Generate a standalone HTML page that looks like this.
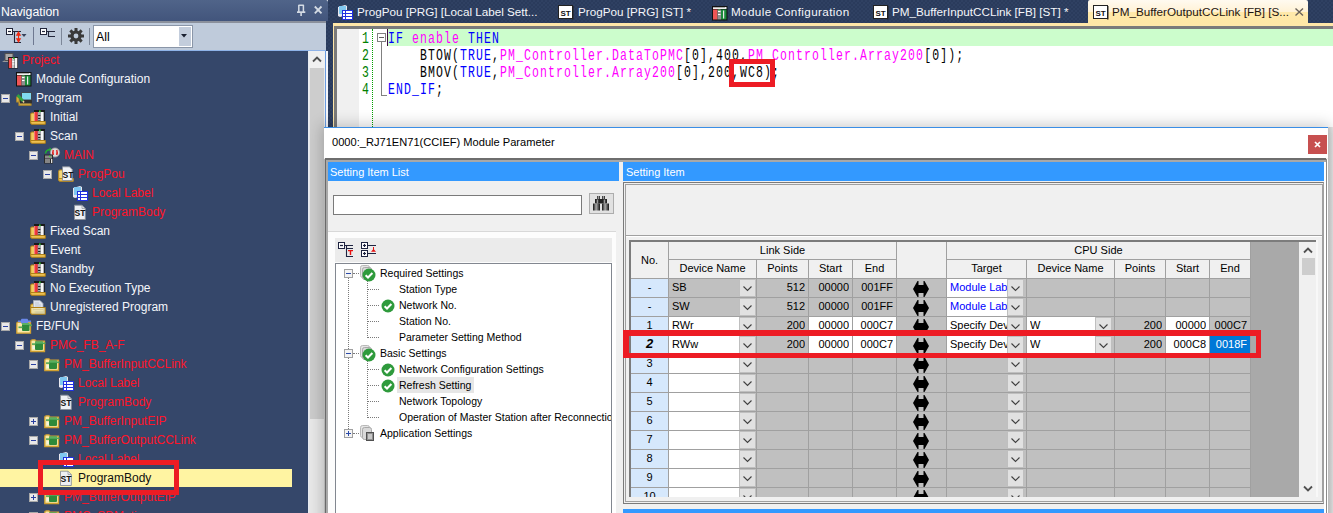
<!DOCTYPE html><html><head><meta charset="utf-8"><style>
html,body{margin:0;padding:0;} body{width:1333px;height:513px;overflow:hidden;position:relative;background:#ffffff;font-family:"Liberation Sans", sans-serif;} div{box-sizing:border-box;} svg{overflow:visible}
</style></head><body>
<div style="position:absolute;left:0px;top:0px;width:328px;height:21px;background:linear-gradient(#506489,#42557c);border-radius:0 2px 0 0;"></div>
<div style="position:absolute;left:1px;top:2px;font-size:12.3px;color:#ffffff;white-space:pre;line-height:21px;height:21px;">Navigation</div>
<svg style="position:absolute;left:290px;top:0px" width="40" height="21" viewBox="0 0 40 21"><path d="M8.5 5.3 H13.8 M8.8 5 V12 M13.4 5 V12" stroke="#d4dbe4" stroke-width="1.5" fill="none"/><rect x="7" y="11.3" width="8.3" height="1.7" fill="#d4dbe4"/><rect x="10.3" y="12.5" width="1.6" height="3.5" fill="#d4dbe4"/><path d="M24.8 6.5 L31.5 13.3 M31.5 6.5 L24.8 13.3" stroke="#d4dbe4" stroke-width="1.8"/></svg>
<div style="position:absolute;left:0px;top:21px;width:326px;height:30px;background:#bfcbdb;border-top:2px solid #8a909c;"></div>
<div style="position:absolute;left:0px;top:50px;width:326px;height:1px;background:#8fb3e8;"></div>
<svg style="position:absolute;left:0px;top:21px" width="60" height="30" viewBox="0 0 60 30"><rect x="6.5" y="7.5" width="6" height="6" fill="#fff" stroke="#22263a"/><path d="M8 10.5 H11" stroke="#22263a" stroke-width="1.2"/><path d="M12.5 10.5 H14.5 M21 10.5 H14.5 V21.5 H21" stroke="#22263a" fill="none" stroke-width="1.1"/><path d="M15.8 14.8 L18.5 10 L21.2 14.8 Z M15.8 17.2 L18.5 22 L21.2 17.2 Z" fill="#f02a10"/><rect x="18" y="14" width="1.1" height="4" fill="#f02a10"/><path d="M21.5 13 L26.5 13 L24 16 Z" fill="#36425a"/><rect x="33" y="6" width="1" height="18" fill="#6e7890"/><rect x="40.5" y="7.5" width="6" height="6" fill="#fff" stroke="#22263a"/><path d="M42 10.5 H45" stroke="#22263a" stroke-width="1.2"/><path d="M46.5 10.5 H48.5 M55 10.5 H48.5 V15.5 H55" stroke="#22263a" fill="none" stroke-width="1.1"/></svg>
<div style="position:absolute;left:61px;top:28px;width:1px;height:17px;background:#7d8798;"></div>
<svg style="position:absolute;left:68px;top:28px" width="16" height="16" viewBox="0 0 16 16"><g transform="translate(8,8)"><circle r="5.6" fill="#3a3a3a"/><circle r="2.4" fill="#bfcbdb"/><rect x="-1.5" y="-8" width="3" height="3.5" fill="#3a3a3a" transform="rotate(0)"/><rect x="-1.5" y="-8" width="3" height="3.5" fill="#3a3a3a" transform="rotate(45)"/><rect x="-1.5" y="-8" width="3" height="3.5" fill="#3a3a3a" transform="rotate(90)"/><rect x="-1.5" y="-8" width="3" height="3.5" fill="#3a3a3a" transform="rotate(135)"/><rect x="-1.5" y="-8" width="3" height="3.5" fill="#3a3a3a" transform="rotate(180)"/><rect x="-1.5" y="-8" width="3" height="3.5" fill="#3a3a3a" transform="rotate(225)"/><rect x="-1.5" y="-8" width="3" height="3.5" fill="#3a3a3a" transform="rotate(270)"/><rect x="-1.5" y="-8" width="3" height="3.5" fill="#3a3a3a" transform="rotate(315)"/></g></svg>
<div style="position:absolute;left:89px;top:28px;width:1px;height:17px;background:#7d8798;"></div>
<div style="position:absolute;left:93px;top:25px;width:100px;height:23px;background:#fff;border:1px solid #8a96a8;"></div>
<div style="position:absolute;left:96px;top:26px;font-size:12.3px;color:#000;white-space:pre;line-height:22px;height:22px;">All</div>
<div style="position:absolute;left:179px;top:27px;width:12px;height:19px;background:#c3cddc;"></div>
<svg style="position:absolute;left:181px;top:34px" width="6" height="4" viewBox="0 0 6 4"><path d="M0 0 H6 L3 3.5 Z" fill="#1a2030"/></svg>
<div style="position:absolute;left:0px;top:51px;width:308px;height:462px;background:#35476a;"></div>
<div style="position:absolute;left:308px;top:51px;width:1px;height:462px;background:#e8ecf2;"></div>
<div style="position:absolute;left:309px;top:51px;width:16px;height:462px;background:#e9e9e9;"></div>
<div style="position:absolute;left:309px;top:51px;width:16px;height:17px;background:#f0f0f0;"></div>
<svg style="position:absolute;left:312px;top:56px" width="10" height="7" viewBox="0 0 10 7"><path d="M1 5.5 L5 1.5 L9 5.5" stroke="#505050" stroke-width="1.8" fill="none"/></svg>
<div style="position:absolute;left:310px;top:68px;width:14px;height:351px;background:#cdcdcd;"></div>
<div style="position:absolute;left:325px;top:51px;width:1px;height:462px;background:#6a9ce0;"></div>
<div style="position:absolute;left:326px;top:51px;width:2px;height:462px;background:#f4f6fa;"></div>
<svg style="position:absolute;left:2px;top:52px" width="16" height="17" viewBox="0 0 16 17"><path d="M0 10 L3 8 H10 V10 Z" fill="#9a9a9a"/><rect x="2.5" y="1" width="9" height="8" fill="#505050"/><rect x="3.5" y="2" width="7" height="6" fill="#a8a8a8"/><rect x="6" y="5" width="10" height="11.5" fill="#1a1a1a"/><rect x="6.8" y="6" width="3" height="10" fill="#f05050"/><rect x="10" y="6" width="2.5" height="10" fill="#c8c8c8"/><rect x="10.3" y="9" width="2" height="1" fill="#fff"/><rect x="10.3" y="11.5" width="2" height="1" fill="#fff"/><rect x="12.8" y="6" width="2.5" height="10" fill="#f4f4f4"/><rect x="11" y="5.5" width="1.5" height="1.5" fill="#30d030"/></svg>
<div style="position:absolute;left:22px;top:51px;font-size:12px;color:#ff1428;white-space:pre;line-height:19px;height:19px;">Project</div>
<svg style="position:absolute;left:16px;top:71px" width="16" height="17" viewBox="0 0 16 17"><rect x="0" y="1" width="15.5" height="14.5" fill="#111"/><rect x="1" y="2" width="13.5" height="2" fill="#f0f0f0"/><path d="M2 2 V3 M4 2 V3 M6 2 V3 M8 2 V3 M10 2 V3 M12 2 V3" stroke="#111" stroke-width="0.6"/><rect x="1" y="4.5" width="4.5" height="10" fill="#f05555"/><rect x="5.5" y="4.5" width="3.5" height="10" fill="#909090"/><rect x="6" y="6" width="2.5" height="1" fill="#fff"/><rect x="6" y="9" width="2.5" height="1" fill="#fff"/><rect x="6.5" y="4.6" width="1.5" height="1" fill="#40e040"/><rect x="9" y="4.5" width="5.5" height="10" fill="#1a8a3a"/><rect x="11" y="5.5" width="1.2" height="8" fill="#e8e8e8"/></svg>
<div style="position:absolute;left:36px;top:70px;font-size:12px;color:#f4f6fa;white-space:pre;line-height:19px;height:19px;">Module Configuration</div>
<svg style="position:absolute;left:1px;top:94px" width="9" height="9" viewBox="0 0 9 9"><rect x="0.5" y="0.5" width="8" height="8" fill="#e8e8e8" stroke="#a8a8a8"/><path d="M2 4.5 H7" stroke="#2a40a0" stroke-width="1"/></svg>
<svg style="position:absolute;left:16px;top:90px" width="16" height="17" viewBox="0 0 16 17"><path d="M0.8 7 H3 V15.2 H15 V12 H0.8 Z" fill="#e8c050" stroke="#b08828" stroke-width="1.2"/><rect x="5.5" y="2.5" width="10" height="7.5" fill="#80d8f0" stroke="#404850" stroke-width="1"/><rect x="4" y="10" width="12" height="3.5" fill="#303030"/><path d="M1.5 5 L7 11" stroke="#30a040" stroke-width="2.6"/><path d="M7 11 L8 12.5" stroke="#f0d0a0" stroke-width="1.5"/></svg>
<div style="position:absolute;left:36px;top:89px;font-size:12px;color:#f4f6fa;white-space:pre;line-height:19px;height:19px;">Program</div>
<svg style="position:absolute;left:30px;top:109px" width="16" height="17" viewBox="0 0 16 17"><path d="M0.7 5 Q0.7 4 2 4 H4.5 V14 H0.7 Z" fill="#f0cc60" stroke="#b08018" stroke-width="1"/><rect x="4" y="1" width="10.6" height="2.2" fill="#1a1a1a"/><rect x="4" y="3" width="3.8" height="10" fill="#ee3434"/><rect x="4.2" y="3" width="0.9" height="10" fill="#f89090"/><rect x="7.8" y="3" width="3" height="10" fill="#a8a8a8"/><rect x="8.1" y="6" width="2.4" height="1" fill="#202020"/><rect x="8.1" y="9" width="2.4" height="1" fill="#202020"/><rect x="8.1" y="11.5" width="2.4" height="1" fill="#202020"/><rect x="10.8" y="3" width="3" height="10" fill="#f6f6f6"/><rect x="13.8" y="1" width="1" height="12" fill="#1a1a1a"/><rect x="9" y="1.5" width="1.6" height="1.6" fill="#30e030"/><path d="M0.7 12.5 H15.3 V15.3 H2 Q0.7 15.3 0.7 14 Z" fill="#eec050" stroke="#b08018" stroke-width="1"/></svg>
<div style="position:absolute;left:50px;top:108px;font-size:12px;color:#f4f6fa;white-space:pre;line-height:19px;height:19px;">Initial</div>
<svg style="position:absolute;left:15px;top:132px" width="9" height="9" viewBox="0 0 9 9"><rect x="0.5" y="0.5" width="8" height="8" fill="#e8e8e8" stroke="#a8a8a8"/><path d="M2 4.5 H7" stroke="#2a40a0" stroke-width="1"/></svg>
<svg style="position:absolute;left:30px;top:128px" width="16" height="17" viewBox="0 0 16 17"><path d="M0.7 5 Q0.7 4 2 4 H4.5 V14 H0.7 Z" fill="#f0cc60" stroke="#b08018" stroke-width="1"/><rect x="4" y="1" width="10.6" height="2.2" fill="#1a1a1a"/><rect x="4" y="3" width="3.8" height="10" fill="#ee3434"/><rect x="4.2" y="3" width="0.9" height="10" fill="#f89090"/><rect x="7.8" y="3" width="3" height="10" fill="#a8a8a8"/><rect x="8.1" y="6" width="2.4" height="1" fill="#202020"/><rect x="8.1" y="9" width="2.4" height="1" fill="#202020"/><rect x="8.1" y="11.5" width="2.4" height="1" fill="#202020"/><rect x="10.8" y="3" width="3" height="10" fill="#f6f6f6"/><rect x="13.8" y="1" width="1" height="12" fill="#1a1a1a"/><rect x="9" y="1.5" width="1.6" height="1.6" fill="#30e030"/><path d="M0.7 12.5 H15.3 V15.3 H2 Q0.7 15.3 0.7 14 Z" fill="#eec050" stroke="#b08018" stroke-width="1"/></svg>
<div style="position:absolute;left:50px;top:127px;font-size:12px;color:#f4f6fa;white-space:pre;line-height:19px;height:19px;">Scan</div>
<svg style="position:absolute;left:29px;top:151px" width="9" height="9" viewBox="0 0 9 9"><rect x="0.5" y="0.5" width="8" height="8" fill="#e8e8e8" stroke="#a8a8a8"/><path d="M2 4.5 H7" stroke="#2a40a0" stroke-width="1"/></svg>
<svg style="position:absolute;left:44px;top:147px" width="16" height="17" viewBox="0 0 16 17"><path d="M1.5 6.5 Q2 2.5 6.5 2.5" stroke="#20b030" stroke-width="1.6" fill="none"/><path d="M5.5 0.5 L8.5 2.5 L5.5 4.5 Z" fill="#20b030"/><circle cx="11" cy="5.5" r="4.6" fill="#dcdcdc" stroke="#9a9a9a" stroke-width="0.8"/><path d="M9.3 3 Q8.3 5.5 9.3 8 M12.7 3 Q13.7 5.5 12.7 8" stroke="#e02020" stroke-width="1.5" fill="none"/><rect x="0" y="7.5" width="9" height="9" fill="#2a2a2a"/><rect x="1" y="8.5" width="7" height="3" fill="#8a8a8a"/><rect x="5" y="8.8" width="1.5" height="1.2" fill="#40e040"/><rect x="1" y="12.5" width="5" height="1" fill="#e0e0e0"/><rect x="1" y="14.5" width="5" height="1" fill="#e0e0e0"/><rect x="7" y="12" width="1.3" height="4" fill="#e0e0e0"/></svg>
<div style="position:absolute;left:64px;top:146px;font-size:12px;color:#ff1428;white-space:pre;line-height:19px;height:19px;">MAIN</div>
<svg style="position:absolute;left:43px;top:170px" width="9" height="9" viewBox="0 0 9 9"><rect x="0.5" y="0.5" width="8" height="8" fill="#e8e8e8" stroke="#a8a8a8"/><path d="M2 4.5 H7" stroke="#2a40a0" stroke-width="1"/></svg>
<svg style="position:absolute;left:58px;top:166px" width="16" height="17" viewBox="0 0 16 17"><path d="M0.7 5 Q0.7 4 2 4 H4.5 V14 H0.7 Z" fill="#f4d878" stroke="#b88a20" stroke-width="1"/><path d="M0.7 12.5 H15.3 V15.3 H2 Q0.7 15.3 0.7 14 Z" fill="#eec050" stroke="#b88a20" stroke-width="1"/><path d="M4.5 0.8 H11.5 L14.2 3.5 V14.5 H4.5 Z" fill="#f2f4f8" stroke="#8a9098" stroke-width="0.9"/><text x="4.6" y="11.6" font-family="Liberation Sans" font-weight="bold" font-size="8.6" fill="#111">ST</text></svg>
<div style="position:absolute;left:78px;top:165px;font-size:12px;color:#ff1428;white-space:pre;line-height:19px;height:19px;">ProgPou</div>
<svg style="position:absolute;left:72px;top:185px" width="16" height="17" viewBox="0 0 16 17"><path d="M1 3 L8 1 L10 2 L10 11 L3 13 L1 12 Z" fill="#e8e8f0"/><rect x="2" y="2" width="7" height="8" fill="#80c8f0"/><rect x="5.5" y="6.5" width="10" height="9" fill="#ffffff" stroke="#2030e0"/><path d="M5.5 9.5 H15.5 M5.5 12.5 H15.5 M8.5 6.5 V15.5" stroke="#2030e0"/></svg>
<div style="position:absolute;left:92px;top:184px;font-size:12px;color:#ff1428;white-space:pre;line-height:19px;height:19px;">Local Label</div>
<svg style="position:absolute;left:72px;top:204px" width="16" height="17" viewBox="0 0 16 17"><path d="M2.5 1.2 H10 L13.3 4.5 V15.5 H2.5 Z" fill="#eef0f4" stroke="#8a9098" stroke-width="0.9"/><path d="M10 1.2 V4.5 H13.3" fill="none" stroke="#8a9098" stroke-width="0.7"/><text x="2.6" y="12.2" font-family="Liberation Sans" font-weight="bold" font-size="8.6" fill="#111">ST</text></svg>
<div style="position:absolute;left:92px;top:203px;font-size:12px;color:#ff1428;white-space:pre;line-height:19px;height:19px;">ProgramBody</div>
<svg style="position:absolute;left:30px;top:223px" width="16" height="17" viewBox="0 0 16 17"><path d="M0.7 5 Q0.7 4 2 4 H4.5 V14 H0.7 Z" fill="#f0cc60" stroke="#b08018" stroke-width="1"/><rect x="4" y="1" width="10.6" height="2.2" fill="#1a1a1a"/><rect x="4" y="3" width="3.8" height="10" fill="#ee3434"/><rect x="4.2" y="3" width="0.9" height="10" fill="#f89090"/><rect x="7.8" y="3" width="3" height="10" fill="#a8a8a8"/><rect x="8.1" y="6" width="2.4" height="1" fill="#202020"/><rect x="8.1" y="9" width="2.4" height="1" fill="#202020"/><rect x="8.1" y="11.5" width="2.4" height="1" fill="#202020"/><rect x="10.8" y="3" width="3" height="10" fill="#f6f6f6"/><rect x="13.8" y="1" width="1" height="12" fill="#1a1a1a"/><rect x="9" y="1.5" width="1.6" height="1.6" fill="#30e030"/><path d="M0.7 12.5 H15.3 V15.3 H2 Q0.7 15.3 0.7 14 Z" fill="#eec050" stroke="#b08018" stroke-width="1"/></svg>
<div style="position:absolute;left:50px;top:222px;font-size:12px;color:#f4f6fa;white-space:pre;line-height:19px;height:19px;">Fixed Scan</div>
<svg style="position:absolute;left:30px;top:242px" width="16" height="17" viewBox="0 0 16 17"><path d="M0.7 5 Q0.7 4 2 4 H4.5 V14 H0.7 Z" fill="#f0cc60" stroke="#b08018" stroke-width="1"/><rect x="4" y="1" width="10.6" height="2.2" fill="#1a1a1a"/><rect x="4" y="3" width="3.8" height="10" fill="#ee3434"/><rect x="4.2" y="3" width="0.9" height="10" fill="#f89090"/><rect x="7.8" y="3" width="3" height="10" fill="#a8a8a8"/><rect x="8.1" y="6" width="2.4" height="1" fill="#202020"/><rect x="8.1" y="9" width="2.4" height="1" fill="#202020"/><rect x="8.1" y="11.5" width="2.4" height="1" fill="#202020"/><rect x="10.8" y="3" width="3" height="10" fill="#f6f6f6"/><rect x="13.8" y="1" width="1" height="12" fill="#1a1a1a"/><rect x="9" y="1.5" width="1.6" height="1.6" fill="#30e030"/><path d="M0.7 12.5 H15.3 V15.3 H2 Q0.7 15.3 0.7 14 Z" fill="#eec050" stroke="#b08018" stroke-width="1"/></svg>
<div style="position:absolute;left:50px;top:241px;font-size:12px;color:#f4f6fa;white-space:pre;line-height:19px;height:19px;">Event</div>
<svg style="position:absolute;left:30px;top:261px" width="16" height="17" viewBox="0 0 16 17"><path d="M0.7 5 Q0.7 4 2 4 H4.5 V14 H0.7 Z" fill="#f0cc60" stroke="#b08018" stroke-width="1"/><rect x="4" y="1" width="10.6" height="2.2" fill="#1a1a1a"/><rect x="4" y="3" width="3.8" height="10" fill="#ee3434"/><rect x="4.2" y="3" width="0.9" height="10" fill="#f89090"/><rect x="7.8" y="3" width="3" height="10" fill="#a8a8a8"/><rect x="8.1" y="6" width="2.4" height="1" fill="#202020"/><rect x="8.1" y="9" width="2.4" height="1" fill="#202020"/><rect x="8.1" y="11.5" width="2.4" height="1" fill="#202020"/><rect x="10.8" y="3" width="3" height="10" fill="#f6f6f6"/><rect x="13.8" y="1" width="1" height="12" fill="#1a1a1a"/><rect x="9" y="1.5" width="1.6" height="1.6" fill="#30e030"/><path d="M0.7 12.5 H15.3 V15.3 H2 Q0.7 15.3 0.7 14 Z" fill="#eec050" stroke="#b08018" stroke-width="1"/></svg>
<div style="position:absolute;left:50px;top:260px;font-size:12px;color:#f4f6fa;white-space:pre;line-height:19px;height:19px;">Standby</div>
<svg style="position:absolute;left:30px;top:280px" width="16" height="17" viewBox="0 0 16 17"><path d="M0.7 5 Q0.7 4 2 4 H4.5 V14 H0.7 Z" fill="#f0cc60" stroke="#b08018" stroke-width="1"/><rect x="4" y="1" width="10.6" height="2.2" fill="#1a1a1a"/><rect x="4" y="3" width="3.8" height="10" fill="#ee3434"/><rect x="4.2" y="3" width="0.9" height="10" fill="#f89090"/><rect x="7.8" y="3" width="3" height="10" fill="#a8a8a8"/><rect x="8.1" y="6" width="2.4" height="1" fill="#202020"/><rect x="8.1" y="9" width="2.4" height="1" fill="#202020"/><rect x="8.1" y="11.5" width="2.4" height="1" fill="#202020"/><rect x="10.8" y="3" width="3" height="10" fill="#f6f6f6"/><rect x="13.8" y="1" width="1" height="12" fill="#1a1a1a"/><rect x="9" y="1.5" width="1.6" height="1.6" fill="#30e030"/><path d="M0.7 12.5 H15.3 V15.3 H2 Q0.7 15.3 0.7 14 Z" fill="#eec050" stroke="#b08018" stroke-width="1"/></svg>
<div style="position:absolute;left:50px;top:279px;font-size:12px;color:#f4f6fa;white-space:pre;line-height:19px;height:19px;">No Execution Type</div>
<svg style="position:absolute;left:30px;top:299px" width="16" height="17" viewBox="0 0 16 17"><path d="M0.7 6 Q0.7 5 2 5 H5 V14 H0.7 Z" fill="#f0cc60" stroke="#b08018" stroke-width="1"/><path d="M3.5 1.5 H10 L13 4.5 V12 H3.5 Z" fill="#dfe4ee" stroke="#a8b0bc" stroke-width="0.8"/><path d="M5 4 H9 M5 6 H11 M5 8 H11" stroke="#b8c0cc" stroke-width="0.8"/><path d="M0.7 8.5 H15.3 V15.3 H2 Q0.7 15.3 0.7 14 Z" fill="#f0e4a8" fill-opacity="0.85" stroke="#b08018" stroke-width="1"/><path d="M3 10.5 H13" stroke="#d8c890" stroke-width="0.8"/></svg>
<div style="position:absolute;left:50px;top:298px;font-size:12px;color:#f4f6fa;white-space:pre;line-height:19px;height:19px;">Unregistered Program</div>
<svg style="position:absolute;left:1px;top:322px" width="9" height="9" viewBox="0 0 9 9"><rect x="0.5" y="0.5" width="8" height="8" fill="#e8e8e8" stroke="#a8a8a8"/><path d="M2 4.5 H7" stroke="#2a40a0" stroke-width="1"/></svg>
<svg style="position:absolute;left:16px;top:318px" width="16" height="17" viewBox="0 0 16 17"><path d="M0.8 5.5 Q0.8 4.2 2 4.2 H14.5 V15.2 H0.8 Z" fill="#f8e8a8" stroke="#d0a030" stroke-width="1.3"/><rect x="5" y="0.8" width="7" height="5" rx="1" fill="#6a88e8"/><rect x="2" y="2.5" width="13" height="1.6" fill="#6a88e8"/><rect x="6" y="5" width="7.5" height="8" rx="1" fill="#2e8a3a"/><rect x="6" y="5" width="7.5" height="2" fill="#5ab060"/><rect x="2.5" y="8.5" width="4" height="1.6" fill="#50a858"/><rect x="13" y="6.5" width="3" height="1.6" fill="#50a858"/><rect x="3" y="11" width="3" height="1.4" fill="#f0f0d0"/></svg>
<div style="position:absolute;left:36px;top:317px;font-size:12px;color:#f4f6fa;white-space:pre;line-height:19px;height:19px;">FB/FUN</div>
<svg style="position:absolute;left:15px;top:341px" width="9" height="9" viewBox="0 0 9 9"><rect x="0.5" y="0.5" width="8" height="8" fill="#e8e8e8" stroke="#a8a8a8"/><path d="M2 4.5 H7" stroke="#2a40a0" stroke-width="1"/></svg>
<svg style="position:absolute;left:30px;top:337px" width="16" height="17" viewBox="0 0 16 17"><path d="M0.8 4.5 Q0.8 2.8 2.5 2.8 H5 L6 4.2 H14.5 V14.5 H0.8 Z" fill="#f8e8a8" stroke="#d0a030" stroke-width="1.3"/><rect x="5" y="4.5" width="8" height="8.5" rx="1" fill="#2e8a3a"/><rect x="5" y="4.5" width="8" height="2.2" fill="#5ab060"/><rect x="2" y="6.3" width="3.5" height="1.6" fill="#50a858"/><rect x="12.5" y="5.5" width="3" height="1.6" fill="#50a858"/><rect x="2.5" y="9" width="2.5" height="3" fill="#f4f4e0"/></svg>
<div style="position:absolute;left:50px;top:336px;font-size:12px;color:#ff1428;white-space:pre;line-height:19px;height:19px;">PMC_FB_A-F</div>
<svg style="position:absolute;left:29px;top:360px" width="9" height="9" viewBox="0 0 9 9"><rect x="0.5" y="0.5" width="8" height="8" fill="#e8e8e8" stroke="#a8a8a8"/><path d="M2 4.5 H7" stroke="#2a40a0" stroke-width="1"/></svg>
<svg style="position:absolute;left:44px;top:356px" width="16" height="17" viewBox="0 0 16 17"><path d="M0.8 4.5 Q0.8 2.8 2.5 2.8 H5 L6 4.2 H14.5 V14.5 H0.8 Z" fill="#f8e8a8" stroke="#d0a030" stroke-width="1.3"/><rect x="5" y="4.5" width="8" height="8.5" rx="1" fill="#2e8a3a"/><rect x="5" y="4.5" width="8" height="2.2" fill="#5ab060"/><rect x="2" y="6.3" width="3.5" height="1.6" fill="#50a858"/><rect x="12.5" y="5.5" width="3" height="1.6" fill="#50a858"/><rect x="2.5" y="9" width="2.5" height="3" fill="#f4f4e0"/></svg>
<div style="position:absolute;left:64px;top:355px;font-size:12px;color:#ff1428;white-space:pre;line-height:19px;height:19px;">PM_BufferInputCCLink</div>
<svg style="position:absolute;left:58px;top:375px" width="16" height="17" viewBox="0 0 16 17"><path d="M1 3 L8 1 L10 2 L10 11 L3 13 L1 12 Z" fill="#e8e8f0"/><rect x="2" y="2" width="7" height="8" fill="#80c8f0"/><rect x="5.5" y="6.5" width="10" height="9" fill="#ffffff" stroke="#2030e0"/><path d="M5.5 9.5 H15.5 M5.5 12.5 H15.5 M8.5 6.5 V15.5" stroke="#2030e0"/></svg>
<div style="position:absolute;left:78px;top:374px;font-size:12px;color:#ff1428;white-space:pre;line-height:19px;height:19px;">Local Label</div>
<svg style="position:absolute;left:58px;top:394px" width="16" height="17" viewBox="0 0 16 17"><path d="M2.5 1.2 H10 L13.3 4.5 V15.5 H2.5 Z" fill="#eef0f4" stroke="#8a9098" stroke-width="0.9"/><path d="M10 1.2 V4.5 H13.3" fill="none" stroke="#8a9098" stroke-width="0.7"/><text x="2.6" y="12.2" font-family="Liberation Sans" font-weight="bold" font-size="8.6" fill="#111">ST</text></svg>
<div style="position:absolute;left:78px;top:393px;font-size:12px;color:#ff1428;white-space:pre;line-height:19px;height:19px;">ProgramBody</div>
<svg style="position:absolute;left:29px;top:417px" width="9" height="9" viewBox="0 0 9 9"><rect x="0.5" y="0.5" width="8" height="8" fill="#e8e8e8" stroke="#a8a8a8"/><path d="M2 4.5 H7" stroke="#2a40a0" stroke-width="1"/><path d="M4.5 2 V7" stroke="#2a40a0" stroke-width="1"/></svg>
<svg style="position:absolute;left:44px;top:413px" width="16" height="17" viewBox="0 0 16 17"><path d="M0.8 4.5 Q0.8 2.8 2.5 2.8 H5 L6 4.2 H14.5 V14.5 H0.8 Z" fill="#f8e8a8" stroke="#d0a030" stroke-width="1.3"/><rect x="5" y="4.5" width="8" height="8.5" rx="1" fill="#2e8a3a"/><rect x="5" y="4.5" width="8" height="2.2" fill="#5ab060"/><rect x="2" y="6.3" width="3.5" height="1.6" fill="#50a858"/><rect x="12.5" y="5.5" width="3" height="1.6" fill="#50a858"/><rect x="2.5" y="9" width="2.5" height="3" fill="#f4f4e0"/></svg>
<div style="position:absolute;left:64px;top:412px;font-size:12px;color:#ff1428;white-space:pre;line-height:19px;height:19px;">PM_BufferInputEIP</div>
<svg style="position:absolute;left:29px;top:436px" width="9" height="9" viewBox="0 0 9 9"><rect x="0.5" y="0.5" width="8" height="8" fill="#e8e8e8" stroke="#a8a8a8"/><path d="M2 4.5 H7" stroke="#2a40a0" stroke-width="1"/></svg>
<svg style="position:absolute;left:44px;top:432px" width="16" height="17" viewBox="0 0 16 17"><path d="M0.8 4.5 Q0.8 2.8 2.5 2.8 H5 L6 4.2 H14.5 V14.5 H0.8 Z" fill="#f8e8a8" stroke="#d0a030" stroke-width="1.3"/><rect x="5" y="4.5" width="8" height="8.5" rx="1" fill="#2e8a3a"/><rect x="5" y="4.5" width="8" height="2.2" fill="#5ab060"/><rect x="2" y="6.3" width="3.5" height="1.6" fill="#50a858"/><rect x="12.5" y="5.5" width="3" height="1.6" fill="#50a858"/><rect x="2.5" y="9" width="2.5" height="3" fill="#f4f4e0"/></svg>
<div style="position:absolute;left:64px;top:431px;font-size:12px;color:#ff1428;white-space:pre;line-height:19px;height:19px;">PM_BufferOutputCCLink</div>
<svg style="position:absolute;left:58px;top:451px" width="16" height="17" viewBox="0 0 16 17"><path d="M1 3 L8 1 L10 2 L10 11 L3 13 L1 12 Z" fill="#e8e8f0"/><rect x="2" y="2" width="7" height="8" fill="#80c8f0"/><rect x="5.5" y="6.5" width="10" height="9" fill="#ffffff" stroke="#2030e0"/><path d="M5.5 9.5 H15.5 M5.5 12.5 H15.5 M8.5 6.5 V15.5" stroke="#2030e0"/></svg>
<div style="position:absolute;left:78px;top:450px;font-size:12px;color:#ff1428;white-space:pre;line-height:19px;height:19px;">Local Label</div>
<div style="position:absolute;left:0px;top:469px;width:292px;height:18px;background:#fff4a2;"></div>
<svg style="position:absolute;left:58px;top:470px" width="16" height="17" viewBox="0 0 16 17"><path d="M2.5 1.2 H10 L13.3 4.5 V15.5 H2.5 Z" fill="#eef0f4" stroke="#8a9098" stroke-width="0.9"/><path d="M10 1.2 V4.5 H13.3" fill="none" stroke="#8a9098" stroke-width="0.7"/><text x="2.6" y="12.2" font-family="Liberation Sans" font-weight="bold" font-size="8.6" fill="#111">ST</text></svg>
<div style="position:absolute;left:78px;top:469px;font-size:12px;color:#101010;white-space:pre;line-height:19px;height:19px;">ProgramBody</div>
<svg style="position:absolute;left:29px;top:493px" width="9" height="9" viewBox="0 0 9 9"><rect x="0.5" y="0.5" width="8" height="8" fill="#e8e8e8" stroke="#a8a8a8"/><path d="M2 4.5 H7" stroke="#2a40a0" stroke-width="1"/><path d="M4.5 2 V7" stroke="#2a40a0" stroke-width="1"/></svg>
<svg style="position:absolute;left:44px;top:489px" width="16" height="17" viewBox="0 0 16 17"><path d="M0.8 4.5 Q0.8 2.8 2.5 2.8 H5 L6 4.2 H14.5 V14.5 H0.8 Z" fill="#f8e8a8" stroke="#d0a030" stroke-width="1.3"/><rect x="5" y="4.5" width="8" height="8.5" rx="1" fill="#2e8a3a"/><rect x="5" y="4.5" width="8" height="2.2" fill="#5ab060"/><rect x="2" y="6.3" width="3.5" height="1.6" fill="#50a858"/><rect x="12.5" y="5.5" width="3" height="1.6" fill="#50a858"/><rect x="2.5" y="9" width="2.5" height="3" fill="#f4f4e0"/></svg>
<div style="position:absolute;left:64px;top:488px;font-size:12px;color:#ff1428;white-space:pre;line-height:19px;height:19px;">PM_BufferOutputEIP</div>
<svg style="position:absolute;left:29px;top:512px" width="9" height="9" viewBox="0 0 9 9"><rect x="0.5" y="0.5" width="8" height="8" fill="#e8e8e8" stroke="#a8a8a8"/><path d="M2 4.5 H7" stroke="#2a40a0" stroke-width="1"/></svg>
<svg style="position:absolute;left:44px;top:508px" width="16" height="17" viewBox="0 0 16 17"><path d="M0.8 4.5 Q0.8 2.8 2.5 2.8 H5 L6 4.2 H14.5 V14.5 H0.8 Z" fill="#f8e8a8" stroke="#d0a030" stroke-width="1.3"/><rect x="5" y="4.5" width="8" height="8.5" rx="1" fill="#2e8a3a"/><rect x="5" y="4.5" width="8" height="2.2" fill="#5ab060"/><rect x="2" y="6.3" width="3.5" height="1.6" fill="#50a858"/><rect x="12.5" y="5.5" width="3" height="1.6" fill="#50a858"/><rect x="2.5" y="9" width="2.5" height="3" fill="#f4f4e0"/></svg>
<div style="position:absolute;left:64px;top:507px;font-size:12px;color:#ff1428;white-space:pre;line-height:19px;height:19px;">PMC_SDMotion</div>
<div style="position:absolute;left:328px;top:0px;width:5px;height:21px;background-color:#2a3b5c;background-image:radial-gradient(circle at 1px 1px,#34466a 0.6px,transparent 0.8px),radial-gradient(circle at 3px 3px,#34466a 0.6px,transparent 0.8px);background-size:4px 4px;"></div>
<div style="position:absolute;left:326px;top:21px;width:7px;height:30px;background-color:#2a3b5c;background-image:radial-gradient(circle at 1px 1px,#34466a 0.6px,transparent 0.8px),radial-gradient(circle at 3px 3px,#34466a 0.6px,transparent 0.8px);background-size:4px 4px;"></div>
<div style="position:absolute;left:328px;top:51px;width:5px;height:462px;background-color:#2a3b5c;background-image:radial-gradient(circle at 1px 1px,#34466a 0.6px,transparent 0.8px),radial-gradient(circle at 3px 3px,#34466a 0.6px,transparent 0.8px);background-size:4px 4px;"></div>
<div style="position:absolute;left:333px;top:0px;width:1000px;height:23px;background-color:#2a3b5c;background-image:radial-gradient(circle at 1px 1px,#34466a 0.6px,transparent 0.8px),radial-gradient(circle at 3px 3px,#34466a 0.6px,transparent 0.8px);background-size:4px 4px;"></div>
<svg style="position:absolute;left:337px;top:4px" width="17" height="16" viewBox="0 0 17 16"><path d="M1 3 L8 1 L10 2 L10 11 L3 13 L1 12 Z" fill="#e8e8f0"/><rect x="2" y="2" width="7" height="8" fill="#80c8f0"/><rect x="5.5" y="6.5" width="10" height="9" fill="#ffffff" stroke="#2030e0"/><path d="M5.5 9.5 H15.5 M5.5 12.5 H15.5 M8.5 6.5 V15.5" stroke="#2030e0"/></svg>
<div style="position:absolute;left:357px;top:0px;font-size:11.7px;color:#f4f6fa;white-space:pre;line-height:23px;height:23px;letter-spacing:0px;">ProgPou [PRG] [Local Label Sett...</div>
<svg style="position:absolute;left:558px;top:5px" width="16" height="15" viewBox="0 0 16 15"><rect x="0.5" y="0.5" width="14" height="13" fill="#fff" stroke="#222"/><rect x="14" y="1" width="1.5" height="13.5" fill="#222"/><text x="2.5" y="10.5" font-family="Liberation Sans" font-weight="bold" font-size="8" fill="#111">ST</text></svg>
<div style="position:absolute;left:578px;top:0px;font-size:11.7px;color:#f4f6fa;white-space:pre;line-height:23px;height:23px;letter-spacing:0px;">ProgPou [PRG] [ST] *</div>
<svg style="position:absolute;left:712px;top:5px" width="16" height="15" viewBox="0 0 16 15"><rect x="0" y="1" width="15.5" height="14.5" fill="#111"/><rect x="1" y="2" width="13.5" height="2" fill="#f0f0f0"/><path d="M2 2 V3 M4 2 V3 M6 2 V3 M8 2 V3 M10 2 V3 M12 2 V3" stroke="#111" stroke-width="0.6"/><rect x="1" y="4.5" width="4.5" height="10" fill="#f05555"/><rect x="5.5" y="4.5" width="3.5" height="10" fill="#909090"/><rect x="6" y="6" width="2.5" height="1" fill="#fff"/><rect x="6" y="9" width="2.5" height="1" fill="#fff"/><rect x="6.5" y="4.6" width="1.5" height="1" fill="#40e040"/><rect x="9" y="4.5" width="5.5" height="10" fill="#1a8a3a"/><rect x="11" y="5.5" width="1.2" height="8" fill="#e8e8e8"/></svg>
<div style="position:absolute;left:731px;top:0px;font-size:11.7px;color:#f4f6fa;white-space:pre;line-height:23px;height:23px;letter-spacing:0.37px;">Module Configuration</div>
<svg style="position:absolute;left:873px;top:5px" width="16" height="15" viewBox="0 0 16 15"><rect x="0.5" y="0.5" width="14" height="13" fill="#fff" stroke="#222"/><rect x="14" y="1" width="1.5" height="13.5" fill="#222"/><text x="2.5" y="10.5" font-family="Liberation Sans" font-weight="bold" font-size="8" fill="#111">ST</text></svg>
<div style="position:absolute;left:892px;top:0px;font-size:11.7px;color:#f4f6fa;white-space:pre;line-height:23px;height:23px;letter-spacing:0px;">PM_BufferInputCCLink [FB] [ST] *</div>
<div style="position:absolute;left:1088px;top:0px;width:220px;height:23px;background:linear-gradient(#fffaf0 0,#fff2d6 50%,#ffe9aa 54%,#ffe7a6 100%);border-radius:2px 2px 0 0;"></div>
<svg style="position:absolute;left:1093px;top:5px" width="16" height="15" viewBox="0 0 16 15"><rect x="0.5" y="0.5" width="14" height="13" fill="#fff" stroke="#222"/><rect x="14" y="1" width="1.5" height="13.5" fill="#222"/><text x="2.5" y="10.5" font-family="Liberation Sans" font-weight="bold" font-size="8" fill="#111">ST</text></svg>
<div style="position:absolute;left:1112px;top:0px;font-size:11.7px;color:#1e1410;white-space:pre;line-height:23px;height:23px;letter-spacing:0px;">PM_BufferOutputCCLink [FB] [S...</div>
<svg style="position:absolute;left:1295px;top:8px" width="9" height="8" viewBox="0 0 9 8"><path d="M0.5 0.5 L8 7.5 M8 0.5 L0.5 7.5" stroke="#6a625a" stroke-width="1.4"/></svg>
<div style="position:absolute;left:333px;top:23px;width:1000px;height:490px;background:#ffe7a8;"></div>
<div style="position:absolute;left:334px;top:26px;width:999px;height:487px;background:#7a7a7a;"></div>
<div style="position:absolute;left:337px;top:29px;width:996px;height:484px;background:#ffffff;"></div>
<div style="position:absolute;left:337px;top:29px;width:22px;height:484px;background:#f0f0f0;"></div>
<div style="position:absolute;left:388px;top:29px;width:945px;height:17px;background:#ccfdcc;"></div>
<div style="position:absolute;left:362px;top:26px;height:17px;line-height:17px;font-family:'Liberation Mono', monospace;font-size:11.5px;letter-spacing:1.1px;color:#008000;white-space:pre;transform:scaleY(1.45);transform-origin:0 0;">1</div>
<div style="position:absolute;left:362px;top:43px;height:17px;line-height:17px;font-family:'Liberation Mono', monospace;font-size:11.5px;letter-spacing:1.1px;color:#008000;white-space:pre;transform:scaleY(1.45);transform-origin:0 0;">2</div>
<div style="position:absolute;left:362px;top:60px;height:17px;line-height:17px;font-family:'Liberation Mono', monospace;font-size:11.5px;letter-spacing:1.1px;color:#008000;white-space:pre;transform:scaleY(1.45);transform-origin:0 0;">3</div>
<div style="position:absolute;left:362px;top:77px;height:17px;line-height:17px;font-family:'Liberation Mono', monospace;font-size:11.5px;letter-spacing:1.1px;color:#008000;white-space:pre;transform:scaleY(1.45);transform-origin:0 0;">4</div>
<div style="position:absolute;left:372px;top:29px;width:1px;height:484px;border-left:1px dotted #00a000;"></div>
<svg style="position:absolute;left:377px;top:33px" width="9" height="9" viewBox="0 0 9 9"><rect x="0.5" y="0.5" width="8" height="8" fill="#fff" stroke="#808080"/><path d="M2 4.5 H7" stroke="#606060"/></svg>
<div style="position:absolute;left:381px;top:42px;width:1px;height:54px;background:#808080;"></div>
<div style="position:absolute;left:381px;top:95px;width:6px;height:1px;background:#808080;"></div>
<div style="position:absolute;left:387px;top:29px;width:1px;height:17px;background:#3a0a3a;"></div>
<div style="position:absolute;left:388px;top:26px;height:17px;line-height:17px;font-family:'Liberation Mono', monospace;font-size:11.5px;letter-spacing:1.1px;white-space:pre;transform:scaleY(1.45);transform-origin:0 0;"><span style="color:#0000ff">IF</span><span style="color:#000000"> </span><span style="color:#ff00ff">enable</span><span style="color:#000000"> </span><span style="color:#0000ff">THEN</span></div>
<div style="position:absolute;left:388px;top:43px;height:17px;line-height:17px;font-family:'Liberation Mono', monospace;font-size:11.5px;letter-spacing:1.1px;white-space:pre;transform:scaleY(1.45);transform-origin:0 0;"><span style="color:#000000">    BTOW(</span><span style="color:#0000ff">TRUE</span><span style="color:#000000">,</span><span style="color:#ff00ff">PM_Controller.DataToPMC</span><span style="color:#000000">[0],400,</span><span style="color:#ff00ff">PM_Controller.Array200</span><span style="color:#000000">[0]);</span></div>
<div style="position:absolute;left:388px;top:60px;height:17px;line-height:17px;font-family:'Liberation Mono', monospace;font-size:11.5px;letter-spacing:1.1px;white-space:pre;transform:scaleY(1.45);transform-origin:0 0;"><span style="color:#000000">    BMOV(</span><span style="color:#0000ff">TRUE</span><span style="color:#000000">,</span><span style="color:#ff00ff">PM_Controller.Array200</span><span style="color:#000000">[0],200,WC8);</span></div>
<div style="position:absolute;left:388px;top:77px;height:17px;line-height:17px;font-family:'Liberation Mono', monospace;font-size:11.5px;letter-spacing:1.1px;white-space:pre;transform:scaleY(1.45);transform-origin:0 0;"><span style="color:#0000ff">END_IF</span><span style="color:#000000">;</span></div>
<div style="position:absolute;left:729px;top:59px;width:46px;height:28px;border:5px solid #ed1c24;"></div>
<div style="position:absolute;left:1328px;top:127px;width:5px;height:386px;background:linear-gradient(90deg,#d6d6d6,#e8e8e8);"></div>
<div style="position:absolute;left:324px;top:127px;width:1004px;height:400px;background:#ffffff;border-top:1px solid #3a8ee6;box-shadow:0 0 14px 2px rgba(0,0,0,0.22);"></div>
<div style="position:absolute;left:332px;top:127px;font-size:11.1px;color:#000;white-space:pre;line-height:30px;height:30px;">0000:_RJ71EN71(CCIEF) Module Parameter</div>
<div style="position:absolute;left:1308px;top:135px;width:19px;height:19px;background:#c75050;"></div>
<svg style="position:absolute;left:1314px;top:141px" width="7" height="7" viewBox="0 0 7 7"><path d="M1 1 L6 6 M6 1 L1 6" stroke="#fff" stroke-width="1.7"/></svg>
<div style="position:absolute;left:324px;top:158px;width:1004px;height:355px;background:#f0f0f0;"></div>
<div style="position:absolute;left:324px;top:159px;width:1px;height:354px;background:#b4b4b4;"></div>
<div style="position:absolute;left:325px;top:158px;width:1001px;height:2px;background:#6e6e6e;"></div>
<div style="position:absolute;left:325px;top:159px;width:1px;height:354px;background:#6a6a6a;"></div>
<div style="position:absolute;left:326px;top:160px;width:1000px;height:2px;background:#a8a8a8;"></div>
<div style="position:absolute;left:326px;top:160px;width:2px;height:353px;background:#a8a8a8;"></div>
<div style="position:absolute;left:1324px;top:162px;width:2px;height:351px;background:#ffffff;"></div>
<div style="position:absolute;left:1326px;top:159px;width:1px;height:354px;background:#8a8a8a;"></div>
<div style="position:absolute;left:1327px;top:159px;width:1px;height:354px;background:#ffffff;"></div>
<div style="position:absolute;left:328px;top:162px;width:291px;height:351px;background:#f0f0f0;"></div>
<div style="position:absolute;left:328px;top:162px;width:291px;height:19px;background:#3399ff;"></div>
<div style="position:absolute;left:330px;top:163px;font-size:11px;color:#ffffff;white-space:pre;line-height:19px;height:19px;">Setting Item List</div>
<div style="position:absolute;left:333px;top:195px;width:249px;height:20px;background:#fff;border:1px solid #7a7a7a;"></div>
<div style="position:absolute;left:589px;top:193px;width:25px;height:21px;background:#e1e1e1;border:1px solid #adadad;"></div>
<svg style="position:absolute;left:584px;top:188px" width="36" height="30" viewBox="0 0 36 30"><defs><linearGradient id="bg1" x1="0" x2="1"><stop offset="0" stop-color="#111"/><stop offset="0.45" stop-color="#a8a8a8"/><stop offset="1" stop-color="#111"/></linearGradient></defs><rect x="13" y="8" width="3" height="3.5" fill="url(#bg1)"/><rect x="18" y="8" width="3" height="3.5" fill="url(#bg1)"/><rect x="11" y="11" width="12" height="4.5" fill="#222"/><rect x="12" y="11.5" width="3" height="4" fill="url(#bg1)"/><rect x="19" y="11.5" width="3" height="4" fill="url(#bg1)"/><rect x="9" y="15.5" width="7" height="7" fill="url(#bg1)"/><rect x="18" y="15.5" width="7" height="7" fill="url(#bg1)"/></svg>
<div style="position:absolute;left:328px;top:231px;width:291px;height:1px;background:#d8d8d8;"></div>
<div style="position:absolute;left:328px;top:232px;width:291px;height:281px;background:#fcfcfc;"></div>
<div style="position:absolute;left:335px;top:238px;width:277px;height:24px;background:#ebebeb;"></div>
<svg style="position:absolute;left:334px;top:236px" width="50" height="26" viewBox="0 0 50 26"><rect x="4.5" y="6.5" width="6" height="6" fill="#fff" stroke="#1e2340"/><path d="M6 9.5 H9" stroke="#1e2340" stroke-width="1.3"/><path d="M10.5 9.5 H19 M12.5 9.5 V20.5 H19 M12.5 12.5 H19" stroke="#1e2340" stroke-width="1.1" fill="none"/><path d="M14 14 H19 V15.3 H17.2 V19 H15.8 V15.3 H14 Z" fill="#e81010"/><rect x="27.5" y="6.5" width="6" height="6" fill="#fff" stroke="#1e2340"/><path d="M29 9.5 H32 M30.5 8 V11" stroke="#1e2340" stroke-width="1.2"/><rect x="27.5" y="14.5" width="6" height="6" fill="#fff" stroke="#1e2340"/><path d="M29 17.5 H32 M30.5 16 V19" stroke="#1e2340" stroke-width="1.2"/><path d="M33.5 9.5 H42 M33.5 17.5 H42" stroke="#1e2340" stroke-width="1.1"/><path d="M37 15.8 L39 13.5 V11 H40 V13.5 L42 15.8 Z" fill="#e81010"/></svg>
<div style="position:absolute;left:335px;top:263px;width:277px;height:250px;background:#fff;border:1px solid #828790;border-bottom:none;"></div>
<div style="position:absolute;left:348px;top:278px;width:1px;height:151px;border-left:1px dotted #7a7a7a;"></div>
<div style="position:absolute;left:353px;top:273px;width:6px;height:1px;border-top:1px dotted #7a7a7a;"></div>
<div style="position:absolute;left:353px;top:353px;width:6px;height:1px;border-top:1px dotted #7a7a7a;"></div>
<div style="position:absolute;left:353px;top:433px;width:6px;height:1px;border-top:1px dotted #7a7a7a;"></div>
<div style="position:absolute;left:367px;top:281px;width:1px;height:57px;border-left:1px dotted #7a7a7a;"></div>
<div style="position:absolute;left:367px;top:361px;width:1px;height:57px;border-left:1px dotted #7a7a7a;"></div>
<div style="position:absolute;left:368px;top:289px;width:11px;height:1px;border-top:1px dotted #7a7a7a;"></div>
<div style="position:absolute;left:368px;top:305px;width:11px;height:1px;border-top:1px dotted #7a7a7a;"></div>
<div style="position:absolute;left:368px;top:321px;width:11px;height:1px;border-top:1px dotted #7a7a7a;"></div>
<div style="position:absolute;left:368px;top:337px;width:11px;height:1px;border-top:1px dotted #7a7a7a;"></div>
<div style="position:absolute;left:368px;top:369px;width:11px;height:1px;border-top:1px dotted #7a7a7a;"></div>
<div style="position:absolute;left:368px;top:385px;width:11px;height:1px;border-top:1px dotted #7a7a7a;"></div>
<div style="position:absolute;left:368px;top:401px;width:11px;height:1px;border-top:1px dotted #7a7a7a;"></div>
<div style="position:absolute;left:368px;top:417px;width:11px;height:1px;border-top:1px dotted #7a7a7a;"></div>
<div style="position:absolute;left:397px;top:377px;width:77px;height:16px;background:#e6e6e6;"></div>
<svg style="position:absolute;left:344px;top:269px" width="9" height="9" viewBox="0 0 9 9"><rect x="0.5" y="0.5" width="8" height="8" fill="#f4f4f4" stroke="#a0a0a0"/><path d="M2 4.5 H7" stroke="#2b4aa8"/></svg>
<svg style="position:absolute;left:359px;top:265px" width="17" height="17" viewBox="0 0 17 17"><rect x="1.5" y="0.5" width="9" height="12" rx="2" fill="#e4e4e4" stroke="#b8b8b8"/><rect x="3.5" y="2.5" width="9" height="12" rx="2" fill="#d8d8d8" stroke="#a8a8a8"/><circle cx="10" cy="10" r="6.5" fill="#2e9a3c"/><path d="M6.6 10.2 L9 12.5 L13.4 8" stroke="#fff" stroke-width="2" fill="none"/></svg>
<div style="position:absolute;left:380px;top:265px;font-size:10.5px;color:#000;white-space:pre;line-height:16px;height:16px;">Required Settings</div>
<div style="position:absolute;left:399px;top:281px;font-size:10.5px;color:#000;white-space:pre;line-height:16px;height:16px;">Station Type</div>
<svg style="position:absolute;left:381px;top:299px" width="14" height="14" viewBox="0 0 14 14"><circle cx="7" cy="7" r="6.5" fill="#2e9a3c"/><path d="M3.6 7.2 L6 9.5 L10.4 5" stroke="#fff" stroke-width="2" fill="none"/></svg>
<div style="position:absolute;left:399px;top:297px;font-size:10.5px;color:#000;white-space:pre;line-height:16px;height:16px;">Network No.</div>
<div style="position:absolute;left:399px;top:313px;font-size:10.5px;color:#000;white-space:pre;line-height:16px;height:16px;">Station No.</div>
<div style="position:absolute;left:399px;top:329px;font-size:10.5px;color:#000;white-space:pre;line-height:16px;height:16px;">Parameter Setting Method</div>
<svg style="position:absolute;left:344px;top:349px" width="9" height="9" viewBox="0 0 9 9"><rect x="0.5" y="0.5" width="8" height="8" fill="#f4f4f4" stroke="#a0a0a0"/><path d="M2 4.5 H7" stroke="#2b4aa8"/></svg>
<svg style="position:absolute;left:359px;top:345px" width="17" height="17" viewBox="0 0 17 17"><rect x="1.5" y="0.5" width="9" height="12" rx="2" fill="#e4e4e4" stroke="#b8b8b8"/><rect x="3.5" y="2.5" width="9" height="12" rx="2" fill="#d8d8d8" stroke="#a8a8a8"/><circle cx="10" cy="10" r="6.5" fill="#2e9a3c"/><path d="M6.6 10.2 L9 12.5 L13.4 8" stroke="#fff" stroke-width="2" fill="none"/></svg>
<div style="position:absolute;left:380px;top:345px;font-size:10.5px;color:#000;white-space:pre;line-height:16px;height:16px;">Basic Settings</div>
<svg style="position:absolute;left:381px;top:363px" width="14" height="14" viewBox="0 0 14 14"><circle cx="7" cy="7" r="6.5" fill="#2e9a3c"/><path d="M3.6 7.2 L6 9.5 L10.4 5" stroke="#fff" stroke-width="2" fill="none"/></svg>
<div style="position:absolute;left:399px;top:361px;font-size:10.5px;color:#000;white-space:pre;line-height:16px;height:16px;">Network Configuration Settings</div>
<svg style="position:absolute;left:381px;top:379px" width="14" height="14" viewBox="0 0 14 14"><circle cx="7" cy="7" r="6.5" fill="#2e9a3c"/><path d="M3.6 7.2 L6 9.5 L10.4 5" stroke="#fff" stroke-width="2" fill="none"/></svg>
<div style="position:absolute;left:399px;top:377px;font-size:10.5px;color:#000;white-space:pre;line-height:16px;height:16px;">Refresh Setting</div>
<div style="position:absolute;left:399px;top:393px;font-size:10.5px;color:#000;white-space:pre;line-height:16px;height:16px;">Network Topology</div>
<div style="position:absolute;left:399px;top:409px;font-size:10.5px;color:#000;white-space:pre;line-height:16px;height:16px;">Operation of Master Station after Reconnection</div>
<svg style="position:absolute;left:344px;top:429px" width="9" height="9" viewBox="0 0 9 9"><rect x="0.5" y="0.5" width="8" height="8" fill="#f4f4f4" stroke="#a0a0a0"/><path d="M2 4.5 H7" stroke="#2b4aa8"/><path d="M4.5 2 V7" stroke="#2b4aa8"/></svg>
<svg style="position:absolute;left:359px;top:425px" width="17" height="17" viewBox="0 0 17 17"><rect x="1.5" y="0.5" width="9" height="12" rx="2" fill="#e4e4e4" stroke="#b8b8b8"/><rect x="3.5" y="2.5" width="9" height="12" rx="2" fill="#d8d8d8" stroke="#a8a8a8"/><rect x="7.5" y="7.5" width="7" height="8" fill="#909090" stroke="#505050"/><rect x="9" y="9" width="4" height="5" fill="#c8c8c8"/></svg>
<div style="position:absolute;left:380px;top:425px;font-size:10.5px;color:#000;white-space:pre;line-height:16px;height:16px;">Application Settings</div>
<div style="position:absolute;left:611px;top:263px;width:8px;height:250px;background:#fff;border-left:1px solid #828790;"></div>
<div style="position:absolute;left:616px;top:182px;width:7px;height:331px;background:#f0f0f0;"></div>
<div style="position:absolute;left:619px;top:162px;width:705px;height:351px;background:#f0f0f0;"></div>
<div style="position:absolute;left:623px;top:162px;width:701px;height:19px;background:#3399ff;"></div>
<div style="position:absolute;left:626px;top:163px;font-size:11px;color:#ffffff;white-space:pre;line-height:19px;height:19px;">Setting Item</div>
<div style="position:absolute;left:623px;top:182px;width:701px;height:322px;border:1px solid #7a7a7a;border-right-color:#a0a0a0;"></div>
<div style="position:absolute;left:625px;top:184px;width:698px;height:318px;border:1px solid #a0a0a0;"></div>
<div style="position:absolute;left:626px;top:235px;width:696px;height:1px;background:#a0a0a0;"></div>
<div style="position:absolute;left:626px;top:236px;width:696px;height:1px;background:#ffffff;"></div>
<div style="position:absolute;left:623px;top:509px;width:701px;height:4px;background:#3399ff;"></div>
<div style="position:absolute;left:629px;top:240px;width:689px;height:257px;background:#a9a9a9;border-left:2px solid #7c7c7c;border-top:2px solid #7c7c7c;"></div>
<div style="position:absolute;left:631px;top:242px;width:619px;height:37px;background:#f0f0f0;"></div>
<div style="position:absolute;left:668px;top:242px;width:1px;height:37px;background:#a0a0a0;"></div>
<div style="position:absolute;left:896px;top:242px;width:1px;height:37px;background:#a0a0a0;"></div>
<div style="position:absolute;left:946px;top:242px;width:1px;height:37px;background:#a0a0a0;"></div>
<div style="position:absolute;left:1250px;top:242px;width:1px;height:37px;background:#a0a0a0;"></div>
<div style="position:absolute;left:756px;top:259px;width:1px;height:19px;background:#a0a0a0;"></div>
<div style="position:absolute;left:808px;top:259px;width:1px;height:19px;background:#a0a0a0;"></div>
<div style="position:absolute;left:852px;top:259px;width:1px;height:19px;background:#a0a0a0;"></div>
<div style="position:absolute;left:1026px;top:259px;width:1px;height:19px;background:#a0a0a0;"></div>
<div style="position:absolute;left:1114px;top:259px;width:1px;height:19px;background:#a0a0a0;"></div>
<div style="position:absolute;left:1165px;top:259px;width:1px;height:19px;background:#a0a0a0;"></div>
<div style="position:absolute;left:1209px;top:259px;width:1px;height:19px;background:#a0a0a0;"></div>
<div style="position:absolute;left:669px;top:259px;width:227px;height:1px;background:#a0a0a0;"></div>
<div style="position:absolute;left:947px;top:259px;width:303px;height:1px;background:#a0a0a0;"></div>
<div style="position:absolute;left:631px;top:278px;width:619px;height:1px;background:#a0a0a0;"></div>
<div style="position:absolute;left:631px;top:242px;width:37px;height:36px;line-height:36px;text-align:center;font-size:11px;color:#000;white-space:pre;overflow:hidden;">No.</div>
<div style="position:absolute;left:669px;top:241px;width:227px;height:18px;line-height:18px;text-align:center;font-size:11px;color:#000;white-space:pre;overflow:hidden;">Link Side</div>
<div style="position:absolute;left:947px;top:241px;width:303px;height:18px;line-height:18px;text-align:center;font-size:11px;color:#000;white-space:pre;overflow:hidden;">CPU Side</div>
<div style="position:absolute;left:669px;top:259px;width:87px;height:18px;line-height:18px;text-align:center;font-size:11px;color:#000;white-space:pre;overflow:hidden;">Device Name</div>
<div style="position:absolute;left:757px;top:259px;width:51px;height:18px;line-height:18px;text-align:center;font-size:11px;color:#000;white-space:pre;overflow:hidden;">Points</div>
<div style="position:absolute;left:809px;top:259px;width:43px;height:18px;line-height:18px;text-align:center;font-size:11px;color:#000;white-space:pre;overflow:hidden;">Start</div>
<div style="position:absolute;left:853px;top:259px;width:43px;height:18px;line-height:18px;text-align:center;font-size:11px;color:#000;white-space:pre;overflow:hidden;">End</div>
<div style="position:absolute;left:947px;top:259px;width:79px;height:18px;line-height:18px;text-align:center;font-size:11px;color:#000;white-space:pre;overflow:hidden;">Target</div>
<div style="position:absolute;left:1027px;top:259px;width:87px;height:18px;line-height:18px;text-align:center;font-size:11px;color:#000;white-space:pre;overflow:hidden;">Device Name</div>
<div style="position:absolute;left:1115px;top:259px;width:50px;height:18px;line-height:18px;text-align:center;font-size:11px;color:#000;white-space:pre;overflow:hidden;">Points</div>
<div style="position:absolute;left:1166px;top:259px;width:43px;height:18px;line-height:18px;text-align:center;font-size:11px;color:#000;white-space:pre;overflow:hidden;">Start</div>
<div style="position:absolute;left:1210px;top:259px;width:40px;height:18px;line-height:18px;text-align:center;font-size:11px;color:#000;white-space:pre;overflow:hidden;">End</div>
<div style="position:absolute;left:0;top:0;width:1333px;height:497px;overflow:hidden;">
<div style="position:absolute;left:631px;top:279px;width:37px;height:18px;background:#d6e8fc;"></div>
<div style="position:absolute;left:631px;top:278px;width:37px;height:18px;line-height:18px;text-align:center;font-size:11px;color:#000;white-space:pre;overflow:hidden;">-</div>
<div style="position:absolute;left:669px;top:279px;width:87px;height:18px;background:#c0c0c0;"></div>
<div style="position:absolute;left:672px;top:278px;width:67px;height:18px;line-height:18px;text-align:left;font-size:11px;color:#000;white-space:pre;overflow:hidden;">SB</div>
<div style="position:absolute;left:739px;top:279px;width:17px;height:18px;background:#e1e1e1;border:1px solid #bfbfbf;"></div>
<svg style="position:absolute;left:743px;top:286px" width="9" height="5" viewBox="0 0 9 5"><path d="M0.5 0.5 L4.5 4.5 L8.5 0.5" stroke="#404040" stroke-width="1.1" fill="none"/></svg>
<div style="position:absolute;left:757px;top:279px;width:51px;height:18px;background:#c0c0c0;"></div>
<div style="position:absolute;left:809px;top:279px;width:43px;height:18px;background:#c0c0c0;"></div>
<div style="position:absolute;left:853px;top:279px;width:43px;height:18px;background:#c0c0c0;"></div>
<div style="position:absolute;left:757px;top:278px;width:48px;height:18px;line-height:18px;text-align:right;font-size:11px;color:#000;white-space:pre;overflow:hidden;">512</div>
<div style="position:absolute;left:809px;top:278px;width:40px;height:18px;line-height:18px;text-align:right;font-size:11px;color:#000;white-space:pre;overflow:hidden;">00000</div>
<div style="position:absolute;left:853px;top:278px;width:40px;height:18px;line-height:18px;text-align:right;font-size:11px;color:#000;white-space:pre;overflow:hidden;">001FF</div>
<div style="position:absolute;left:897px;top:279px;width:49px;height:18px;background:#c0c0c0;"></div>
<svg style="position:absolute;left:913px;top:281px" width="16" height="16" viewBox="0 0 16 16"><path d="M0 8 L4.5 0 H5.5 V4 H10.5 V0 H11.5 L16 8 L11.5 16 H10.5 V12 H5.5 V16 H4.5 Z" fill="#000"/></svg>
<div style="position:absolute;left:947px;top:279px;width:79px;height:18px;background:#ffffff;"></div>
<div style="position:absolute;left:950px;top:278px;width:58px;height:18px;line-height:18px;text-align:left;font-size:11px;color:#0000ff;white-space:pre;overflow:hidden;">Module Label</div>
<div style="position:absolute;left:1024px;top:279px;width:2px;height:18px;background:#c0c0c0;"></div>
<div style="position:absolute;left:1007px;top:279px;width:17px;height:18px;background:#e1e1e1;border:1px solid #bfbfbf;"></div>
<svg style="position:absolute;left:1011px;top:286px" width="9" height="5" viewBox="0 0 9 5"><path d="M0.5 0.5 L4.5 4.5 L8.5 0.5" stroke="#404040" stroke-width="1.1" fill="none"/></svg>
<div style="position:absolute;left:1027px;top:279px;width:87px;height:18px;background:#c0c0c0;"></div>
<div style="position:absolute;left:1115px;top:279px;width:50px;height:18px;background:#c0c0c0;"></div>
<div style="position:absolute;left:1166px;top:279px;width:43px;height:18px;background:#c0c0c0;"></div>
<div style="position:absolute;left:1210px;top:279px;width:40px;height:18px;background:#c0c0c0;"></div>
<div style="position:absolute;left:631px;top:297px;width:619px;height:1px;background:#a0a0a0;"></div>
<div style="position:absolute;left:668px;top:279px;width:1px;height:19px;background:#a0a0a0;"></div>
<div style="position:absolute;left:756px;top:279px;width:1px;height:19px;background:#a0a0a0;"></div>
<div style="position:absolute;left:808px;top:279px;width:1px;height:19px;background:#a0a0a0;"></div>
<div style="position:absolute;left:852px;top:279px;width:1px;height:19px;background:#a0a0a0;"></div>
<div style="position:absolute;left:896px;top:279px;width:1px;height:19px;background:#a0a0a0;"></div>
<div style="position:absolute;left:946px;top:279px;width:1px;height:19px;background:#a0a0a0;"></div>
<div style="position:absolute;left:1026px;top:279px;width:1px;height:19px;background:#a0a0a0;"></div>
<div style="position:absolute;left:1114px;top:279px;width:1px;height:19px;background:#a0a0a0;"></div>
<div style="position:absolute;left:1165px;top:279px;width:1px;height:19px;background:#a0a0a0;"></div>
<div style="position:absolute;left:1209px;top:279px;width:1px;height:19px;background:#a0a0a0;"></div>
<div style="position:absolute;left:1250px;top:279px;width:1px;height:19px;background:#a0a0a0;"></div>
<div style="position:absolute;left:631px;top:298px;width:37px;height:18px;background:#d6e8fc;"></div>
<div style="position:absolute;left:631px;top:297px;width:37px;height:18px;line-height:18px;text-align:center;font-size:11px;color:#000;white-space:pre;overflow:hidden;">-</div>
<div style="position:absolute;left:669px;top:298px;width:87px;height:18px;background:#c0c0c0;"></div>
<div style="position:absolute;left:672px;top:297px;width:67px;height:18px;line-height:18px;text-align:left;font-size:11px;color:#000;white-space:pre;overflow:hidden;">SW</div>
<div style="position:absolute;left:739px;top:298px;width:17px;height:18px;background:#e1e1e1;border:1px solid #bfbfbf;"></div>
<svg style="position:absolute;left:743px;top:305px" width="9" height="5" viewBox="0 0 9 5"><path d="M0.5 0.5 L4.5 4.5 L8.5 0.5" stroke="#404040" stroke-width="1.1" fill="none"/></svg>
<div style="position:absolute;left:757px;top:298px;width:51px;height:18px;background:#c0c0c0;"></div>
<div style="position:absolute;left:809px;top:298px;width:43px;height:18px;background:#c0c0c0;"></div>
<div style="position:absolute;left:853px;top:298px;width:43px;height:18px;background:#c0c0c0;"></div>
<div style="position:absolute;left:757px;top:297px;width:48px;height:18px;line-height:18px;text-align:right;font-size:11px;color:#000;white-space:pre;overflow:hidden;">512</div>
<div style="position:absolute;left:809px;top:297px;width:40px;height:18px;line-height:18px;text-align:right;font-size:11px;color:#000;white-space:pre;overflow:hidden;">00000</div>
<div style="position:absolute;left:853px;top:297px;width:40px;height:18px;line-height:18px;text-align:right;font-size:11px;color:#000;white-space:pre;overflow:hidden;">001FF</div>
<div style="position:absolute;left:897px;top:298px;width:49px;height:18px;background:#c0c0c0;"></div>
<svg style="position:absolute;left:913px;top:300px" width="16" height="16" viewBox="0 0 16 16"><path d="M0 8 L4.5 0 H5.5 V4 H10.5 V0 H11.5 L16 8 L11.5 16 H10.5 V12 H5.5 V16 H4.5 Z" fill="#000"/></svg>
<div style="position:absolute;left:947px;top:298px;width:79px;height:18px;background:#ffffff;"></div>
<div style="position:absolute;left:950px;top:297px;width:58px;height:18px;line-height:18px;text-align:left;font-size:11px;color:#0000ff;white-space:pre;overflow:hidden;">Module Label</div>
<div style="position:absolute;left:1024px;top:298px;width:2px;height:18px;background:#c0c0c0;"></div>
<div style="position:absolute;left:1007px;top:298px;width:17px;height:18px;background:#e1e1e1;border:1px solid #bfbfbf;"></div>
<svg style="position:absolute;left:1011px;top:305px" width="9" height="5" viewBox="0 0 9 5"><path d="M0.5 0.5 L4.5 4.5 L8.5 0.5" stroke="#404040" stroke-width="1.1" fill="none"/></svg>
<div style="position:absolute;left:1027px;top:298px;width:87px;height:18px;background:#c0c0c0;"></div>
<div style="position:absolute;left:1115px;top:298px;width:50px;height:18px;background:#c0c0c0;"></div>
<div style="position:absolute;left:1166px;top:298px;width:43px;height:18px;background:#c0c0c0;"></div>
<div style="position:absolute;left:1210px;top:298px;width:40px;height:18px;background:#c0c0c0;"></div>
<div style="position:absolute;left:631px;top:316px;width:619px;height:1px;background:#a0a0a0;"></div>
<div style="position:absolute;left:668px;top:298px;width:1px;height:19px;background:#a0a0a0;"></div>
<div style="position:absolute;left:756px;top:298px;width:1px;height:19px;background:#a0a0a0;"></div>
<div style="position:absolute;left:808px;top:298px;width:1px;height:19px;background:#a0a0a0;"></div>
<div style="position:absolute;left:852px;top:298px;width:1px;height:19px;background:#a0a0a0;"></div>
<div style="position:absolute;left:896px;top:298px;width:1px;height:19px;background:#a0a0a0;"></div>
<div style="position:absolute;left:946px;top:298px;width:1px;height:19px;background:#a0a0a0;"></div>
<div style="position:absolute;left:1026px;top:298px;width:1px;height:19px;background:#a0a0a0;"></div>
<div style="position:absolute;left:1114px;top:298px;width:1px;height:19px;background:#a0a0a0;"></div>
<div style="position:absolute;left:1165px;top:298px;width:1px;height:19px;background:#a0a0a0;"></div>
<div style="position:absolute;left:1209px;top:298px;width:1px;height:19px;background:#a0a0a0;"></div>
<div style="position:absolute;left:1250px;top:298px;width:1px;height:19px;background:#a0a0a0;"></div>
<div style="position:absolute;left:631px;top:317px;width:37px;height:18px;background:#d6e8fc;"></div>
<div style="position:absolute;left:631px;top:316px;width:37px;height:18px;line-height:18px;text-align:center;font-size:11px;color:#000;white-space:pre;overflow:hidden;">1</div>
<div style="position:absolute;left:669px;top:317px;width:87px;height:18px;background:#ffffff;"></div>
<div style="position:absolute;left:739px;top:317px;width:17px;height:18px;background:#e1e1e1;border:1px solid #bfbfbf;"></div>
<svg style="position:absolute;left:743px;top:324px" width="9" height="5" viewBox="0 0 9 5"><path d="M0.5 0.5 L4.5 4.5 L8.5 0.5" stroke="#404040" stroke-width="1.1" fill="none"/></svg>
<div style="position:absolute;left:672px;top:316px;width:67px;height:18px;line-height:18px;text-align:left;font-size:11px;color:#000;white-space:pre;overflow:hidden;">RWr</div>
<div style="position:absolute;left:757px;top:317px;width:51px;height:18px;background:#c0c0c0;"></div>
<div style="position:absolute;left:809px;top:317px;width:43px;height:18px;background:#ffffff;"></div>
<div style="position:absolute;left:853px;top:317px;width:43px;height:18px;background:#ffffff;"></div>
<div style="position:absolute;left:757px;top:316px;width:48px;height:18px;line-height:18px;text-align:right;font-size:11px;color:#000;white-space:pre;overflow:hidden;">200</div>
<div style="position:absolute;left:809px;top:316px;width:40px;height:18px;line-height:18px;text-align:right;font-size:11px;color:#000;white-space:pre;overflow:hidden;">00000</div>
<div style="position:absolute;left:853px;top:316px;width:40px;height:18px;line-height:18px;text-align:right;font-size:11px;color:#000;white-space:pre;overflow:hidden;">000C7</div>
<div style="position:absolute;left:897px;top:317px;width:49px;height:18px;background:#c0c0c0;"></div>
<svg style="position:absolute;left:913px;top:319px" width="16" height="16" viewBox="0 0 16 16"><path d="M0 8 L4.5 0 H5.5 V4 H10.5 V0 H11.5 L16 8 L11.5 16 H10.5 V12 H5.5 V16 H4.5 Z" fill="#000"/></svg>
<div style="position:absolute;left:947px;top:317px;width:79px;height:18px;background:#ffffff;"></div>
<div style="position:absolute;left:950px;top:316px;width:58px;height:18px;line-height:18px;text-align:left;font-size:11px;color:#000;white-space:pre;overflow:hidden;">Specify Device</div>
<div style="position:absolute;left:1024px;top:317px;width:2px;height:18px;background:#c0c0c0;"></div>
<div style="position:absolute;left:1007px;top:317px;width:17px;height:18px;background:#e1e1e1;border:1px solid #bfbfbf;"></div>
<svg style="position:absolute;left:1011px;top:324px" width="9" height="5" viewBox="0 0 9 5"><path d="M0.5 0.5 L4.5 4.5 L8.5 0.5" stroke="#404040" stroke-width="1.1" fill="none"/></svg>
<div style="position:absolute;left:1027px;top:317px;width:87px;height:18px;background:#ffffff;"></div>
<div style="position:absolute;left:1030px;top:316px;width:66px;height:18px;line-height:18px;text-align:left;font-size:11px;color:#000;white-space:pre;overflow:hidden;">W</div>
<div style="position:absolute;left:1112px;top:317px;width:2px;height:18px;background:#c0c0c0;"></div>
<div style="position:absolute;left:1095px;top:317px;width:17px;height:18px;background:#e1e1e1;border:1px solid #bfbfbf;"></div>
<svg style="position:absolute;left:1099px;top:324px" width="9" height="5" viewBox="0 0 9 5"><path d="M0.5 0.5 L4.5 4.5 L8.5 0.5" stroke="#404040" stroke-width="1.1" fill="none"/></svg>
<div style="position:absolute;left:1115px;top:317px;width:50px;height:18px;background:#c0c0c0;"></div>
<div style="position:absolute;left:1166px;top:317px;width:43px;height:18px;background:#ffffff;"></div>
<div style="position:absolute;left:1210px;top:317px;width:40px;height:18px;background:#c0c0c0;"></div>
<div style="position:absolute;left:1115px;top:316px;width:47px;height:18px;line-height:18px;text-align:right;font-size:11px;color:#000;white-space:pre;overflow:hidden;">200</div>
<div style="position:absolute;left:1166px;top:316px;width:40px;height:18px;line-height:18px;text-align:right;font-size:11px;color:#000;white-space:pre;overflow:hidden;">00000</div>
<div style="position:absolute;left:1210px;top:316px;width:37px;height:18px;line-height:18px;text-align:right;font-size:11px;color:#000;white-space:pre;overflow:hidden;">000C7</div>
<div style="position:absolute;left:631px;top:335px;width:619px;height:1px;background:#a0a0a0;"></div>
<div style="position:absolute;left:668px;top:317px;width:1px;height:19px;background:#a0a0a0;"></div>
<div style="position:absolute;left:756px;top:317px;width:1px;height:19px;background:#a0a0a0;"></div>
<div style="position:absolute;left:808px;top:317px;width:1px;height:19px;background:#a0a0a0;"></div>
<div style="position:absolute;left:852px;top:317px;width:1px;height:19px;background:#a0a0a0;"></div>
<div style="position:absolute;left:896px;top:317px;width:1px;height:19px;background:#a0a0a0;"></div>
<div style="position:absolute;left:946px;top:317px;width:1px;height:19px;background:#a0a0a0;"></div>
<div style="position:absolute;left:1026px;top:317px;width:1px;height:19px;background:#a0a0a0;"></div>
<div style="position:absolute;left:1114px;top:317px;width:1px;height:19px;background:#a0a0a0;"></div>
<div style="position:absolute;left:1165px;top:317px;width:1px;height:19px;background:#a0a0a0;"></div>
<div style="position:absolute;left:1209px;top:317px;width:1px;height:19px;background:#a0a0a0;"></div>
<div style="position:absolute;left:1250px;top:317px;width:1px;height:19px;background:#a0a0a0;"></div>
<div style="position:absolute;left:631px;top:336px;width:37px;height:18px;background:#d6e8fc;"></div>
<div style="position:absolute;left:631px;top:335px;width:37px;height:18px;line-height:18px;text-align:center;font-size:11px;color:#000;white-space:pre;overflow:hidden;font-weight:bold;font-style:italic;font-size:13px;">2</div>
<div style="position:absolute;left:669px;top:336px;width:87px;height:18px;background:#ffffff;"></div>
<div style="position:absolute;left:739px;top:336px;width:17px;height:18px;background:#e1e1e1;border:1px solid #bfbfbf;"></div>
<svg style="position:absolute;left:743px;top:343px" width="9" height="5" viewBox="0 0 9 5"><path d="M0.5 0.5 L4.5 4.5 L8.5 0.5" stroke="#404040" stroke-width="1.1" fill="none"/></svg>
<div style="position:absolute;left:672px;top:335px;width:67px;height:18px;line-height:18px;text-align:left;font-size:11px;color:#000;white-space:pre;overflow:hidden;">RWw</div>
<div style="position:absolute;left:757px;top:336px;width:51px;height:18px;background:#c0c0c0;"></div>
<div style="position:absolute;left:809px;top:336px;width:43px;height:18px;background:#ffffff;"></div>
<div style="position:absolute;left:853px;top:336px;width:43px;height:18px;background:#ffffff;"></div>
<div style="position:absolute;left:757px;top:335px;width:48px;height:18px;line-height:18px;text-align:right;font-size:11px;color:#000;white-space:pre;overflow:hidden;">200</div>
<div style="position:absolute;left:809px;top:335px;width:40px;height:18px;line-height:18px;text-align:right;font-size:11px;color:#000;white-space:pre;overflow:hidden;">00000</div>
<div style="position:absolute;left:853px;top:335px;width:40px;height:18px;line-height:18px;text-align:right;font-size:11px;color:#000;white-space:pre;overflow:hidden;">000C7</div>
<div style="position:absolute;left:897px;top:336px;width:49px;height:18px;background:#c0c0c0;"></div>
<svg style="position:absolute;left:913px;top:338px" width="16" height="16" viewBox="0 0 16 16"><path d="M0 8 L4.5 0 H5.5 V4 H10.5 V0 H11.5 L16 8 L11.5 16 H10.5 V12 H5.5 V16 H4.5 Z" fill="#000"/></svg>
<div style="position:absolute;left:947px;top:336px;width:79px;height:18px;background:#ffffff;"></div>
<div style="position:absolute;left:950px;top:335px;width:58px;height:18px;line-height:18px;text-align:left;font-size:11px;color:#000;white-space:pre;overflow:hidden;">Specify Device</div>
<div style="position:absolute;left:1024px;top:336px;width:2px;height:18px;background:#c0c0c0;"></div>
<div style="position:absolute;left:1007px;top:336px;width:17px;height:18px;background:#e1e1e1;border:1px solid #bfbfbf;"></div>
<svg style="position:absolute;left:1011px;top:343px" width="9" height="5" viewBox="0 0 9 5"><path d="M0.5 0.5 L4.5 4.5 L8.5 0.5" stroke="#404040" stroke-width="1.1" fill="none"/></svg>
<div style="position:absolute;left:1027px;top:336px;width:87px;height:18px;background:#ffffff;"></div>
<div style="position:absolute;left:1030px;top:335px;width:66px;height:18px;line-height:18px;text-align:left;font-size:11px;color:#000;white-space:pre;overflow:hidden;">W</div>
<div style="position:absolute;left:1112px;top:336px;width:2px;height:18px;background:#c0c0c0;"></div>
<div style="position:absolute;left:1095px;top:336px;width:17px;height:18px;background:#e1e1e1;border:1px solid #bfbfbf;"></div>
<svg style="position:absolute;left:1099px;top:343px" width="9" height="5" viewBox="0 0 9 5"><path d="M0.5 0.5 L4.5 4.5 L8.5 0.5" stroke="#404040" stroke-width="1.1" fill="none"/></svg>
<div style="position:absolute;left:1115px;top:336px;width:50px;height:18px;background:#c0c0c0;"></div>
<div style="position:absolute;left:1166px;top:336px;width:43px;height:18px;background:#ffffff;"></div>
<div style="position:absolute;left:1210px;top:336px;width:40px;height:18px;background:#c0c0c0;"></div>
<div style="position:absolute;left:1115px;top:335px;width:47px;height:18px;line-height:18px;text-align:right;font-size:11px;color:#000;white-space:pre;overflow:hidden;">200</div>
<div style="position:absolute;left:1166px;top:335px;width:40px;height:18px;line-height:18px;text-align:right;font-size:11px;color:#000;white-space:pre;overflow:hidden;">000C8</div>
<div style="position:absolute;left:1210px;top:336px;width:40px;height:18px;background:#0078d7;"></div>
<div style="position:absolute;left:1210px;top:335px;width:37px;height:18px;line-height:18px;text-align:right;font-size:11px;color:#ffffff;white-space:pre;overflow:hidden;">0018F</div>
<div style="position:absolute;left:631px;top:354px;width:619px;height:1px;background:#a0a0a0;"></div>
<div style="position:absolute;left:668px;top:336px;width:1px;height:19px;background:#a0a0a0;"></div>
<div style="position:absolute;left:756px;top:336px;width:1px;height:19px;background:#a0a0a0;"></div>
<div style="position:absolute;left:808px;top:336px;width:1px;height:19px;background:#a0a0a0;"></div>
<div style="position:absolute;left:852px;top:336px;width:1px;height:19px;background:#a0a0a0;"></div>
<div style="position:absolute;left:896px;top:336px;width:1px;height:19px;background:#a0a0a0;"></div>
<div style="position:absolute;left:946px;top:336px;width:1px;height:19px;background:#a0a0a0;"></div>
<div style="position:absolute;left:1026px;top:336px;width:1px;height:19px;background:#a0a0a0;"></div>
<div style="position:absolute;left:1114px;top:336px;width:1px;height:19px;background:#a0a0a0;"></div>
<div style="position:absolute;left:1165px;top:336px;width:1px;height:19px;background:#a0a0a0;"></div>
<div style="position:absolute;left:1209px;top:336px;width:1px;height:19px;background:#a0a0a0;"></div>
<div style="position:absolute;left:1250px;top:336px;width:1px;height:19px;background:#a0a0a0;"></div>
<div style="position:absolute;left:631px;top:355px;width:37px;height:18px;background:#d6e8fc;"></div>
<div style="position:absolute;left:631px;top:354px;width:37px;height:18px;line-height:18px;text-align:center;font-size:11px;color:#000;white-space:pre;overflow:hidden;">3</div>
<div style="position:absolute;left:669px;top:355px;width:87px;height:18px;background:#ffffff;"></div>
<div style="position:absolute;left:739px;top:355px;width:17px;height:18px;background:#e1e1e1;border:1px solid #bfbfbf;"></div>
<svg style="position:absolute;left:743px;top:362px" width="9" height="5" viewBox="0 0 9 5"><path d="M0.5 0.5 L4.5 4.5 L8.5 0.5" stroke="#404040" stroke-width="1.1" fill="none"/></svg>
<div style="position:absolute;left:757px;top:355px;width:51px;height:18px;background:#c0c0c0;"></div>
<div style="position:absolute;left:809px;top:355px;width:43px;height:18px;background:#c0c0c0;"></div>
<div style="position:absolute;left:853px;top:355px;width:43px;height:18px;background:#c0c0c0;"></div>
<div style="position:absolute;left:897px;top:355px;width:49px;height:18px;background:#c0c0c0;"></div>
<svg style="position:absolute;left:913px;top:357px" width="16" height="16" viewBox="0 0 16 16"><path d="M0 8 L4.5 0 H5.5 V4 H10.5 V0 H11.5 L16 8 L11.5 16 H10.5 V12 H5.5 V16 H4.5 Z" fill="#000"/></svg>
<div style="position:absolute;left:947px;top:355px;width:79px;height:18px;background:#c0c0c0;"></div>
<div style="position:absolute;left:1007px;top:355px;width:17px;height:18px;background:#e1e1e1;border:1px solid #bfbfbf;"></div>
<svg style="position:absolute;left:1011px;top:362px" width="9" height="5" viewBox="0 0 9 5"><path d="M0.5 0.5 L4.5 4.5 L8.5 0.5" stroke="#404040" stroke-width="1.1" fill="none"/></svg>
<div style="position:absolute;left:1027px;top:355px;width:87px;height:18px;background:#c0c0c0;"></div>
<div style="position:absolute;left:1115px;top:355px;width:50px;height:18px;background:#c0c0c0;"></div>
<div style="position:absolute;left:1166px;top:355px;width:43px;height:18px;background:#c0c0c0;"></div>
<div style="position:absolute;left:1210px;top:355px;width:40px;height:18px;background:#c0c0c0;"></div>
<div style="position:absolute;left:631px;top:373px;width:619px;height:1px;background:#a0a0a0;"></div>
<div style="position:absolute;left:668px;top:355px;width:1px;height:19px;background:#a0a0a0;"></div>
<div style="position:absolute;left:756px;top:355px;width:1px;height:19px;background:#a0a0a0;"></div>
<div style="position:absolute;left:808px;top:355px;width:1px;height:19px;background:#a0a0a0;"></div>
<div style="position:absolute;left:852px;top:355px;width:1px;height:19px;background:#a0a0a0;"></div>
<div style="position:absolute;left:896px;top:355px;width:1px;height:19px;background:#a0a0a0;"></div>
<div style="position:absolute;left:946px;top:355px;width:1px;height:19px;background:#a0a0a0;"></div>
<div style="position:absolute;left:1026px;top:355px;width:1px;height:19px;background:#a0a0a0;"></div>
<div style="position:absolute;left:1114px;top:355px;width:1px;height:19px;background:#a0a0a0;"></div>
<div style="position:absolute;left:1165px;top:355px;width:1px;height:19px;background:#a0a0a0;"></div>
<div style="position:absolute;left:1209px;top:355px;width:1px;height:19px;background:#a0a0a0;"></div>
<div style="position:absolute;left:1250px;top:355px;width:1px;height:19px;background:#a0a0a0;"></div>
<div style="position:absolute;left:631px;top:374px;width:37px;height:18px;background:#d6e8fc;"></div>
<div style="position:absolute;left:631px;top:373px;width:37px;height:18px;line-height:18px;text-align:center;font-size:11px;color:#000;white-space:pre;overflow:hidden;">4</div>
<div style="position:absolute;left:669px;top:374px;width:87px;height:18px;background:#ffffff;"></div>
<div style="position:absolute;left:739px;top:374px;width:17px;height:18px;background:#e1e1e1;border:1px solid #bfbfbf;"></div>
<svg style="position:absolute;left:743px;top:381px" width="9" height="5" viewBox="0 0 9 5"><path d="M0.5 0.5 L4.5 4.5 L8.5 0.5" stroke="#404040" stroke-width="1.1" fill="none"/></svg>
<div style="position:absolute;left:757px;top:374px;width:51px;height:18px;background:#c0c0c0;"></div>
<div style="position:absolute;left:809px;top:374px;width:43px;height:18px;background:#c0c0c0;"></div>
<div style="position:absolute;left:853px;top:374px;width:43px;height:18px;background:#c0c0c0;"></div>
<div style="position:absolute;left:897px;top:374px;width:49px;height:18px;background:#c0c0c0;"></div>
<svg style="position:absolute;left:913px;top:376px" width="16" height="16" viewBox="0 0 16 16"><path d="M0 8 L4.5 0 H5.5 V4 H10.5 V0 H11.5 L16 8 L11.5 16 H10.5 V12 H5.5 V16 H4.5 Z" fill="#000"/></svg>
<div style="position:absolute;left:947px;top:374px;width:79px;height:18px;background:#c0c0c0;"></div>
<div style="position:absolute;left:1007px;top:374px;width:17px;height:18px;background:#e1e1e1;border:1px solid #bfbfbf;"></div>
<svg style="position:absolute;left:1011px;top:381px" width="9" height="5" viewBox="0 0 9 5"><path d="M0.5 0.5 L4.5 4.5 L8.5 0.5" stroke="#404040" stroke-width="1.1" fill="none"/></svg>
<div style="position:absolute;left:1027px;top:374px;width:87px;height:18px;background:#c0c0c0;"></div>
<div style="position:absolute;left:1115px;top:374px;width:50px;height:18px;background:#c0c0c0;"></div>
<div style="position:absolute;left:1166px;top:374px;width:43px;height:18px;background:#c0c0c0;"></div>
<div style="position:absolute;left:1210px;top:374px;width:40px;height:18px;background:#c0c0c0;"></div>
<div style="position:absolute;left:631px;top:392px;width:619px;height:1px;background:#a0a0a0;"></div>
<div style="position:absolute;left:668px;top:374px;width:1px;height:19px;background:#a0a0a0;"></div>
<div style="position:absolute;left:756px;top:374px;width:1px;height:19px;background:#a0a0a0;"></div>
<div style="position:absolute;left:808px;top:374px;width:1px;height:19px;background:#a0a0a0;"></div>
<div style="position:absolute;left:852px;top:374px;width:1px;height:19px;background:#a0a0a0;"></div>
<div style="position:absolute;left:896px;top:374px;width:1px;height:19px;background:#a0a0a0;"></div>
<div style="position:absolute;left:946px;top:374px;width:1px;height:19px;background:#a0a0a0;"></div>
<div style="position:absolute;left:1026px;top:374px;width:1px;height:19px;background:#a0a0a0;"></div>
<div style="position:absolute;left:1114px;top:374px;width:1px;height:19px;background:#a0a0a0;"></div>
<div style="position:absolute;left:1165px;top:374px;width:1px;height:19px;background:#a0a0a0;"></div>
<div style="position:absolute;left:1209px;top:374px;width:1px;height:19px;background:#a0a0a0;"></div>
<div style="position:absolute;left:1250px;top:374px;width:1px;height:19px;background:#a0a0a0;"></div>
<div style="position:absolute;left:631px;top:393px;width:37px;height:18px;background:#d6e8fc;"></div>
<div style="position:absolute;left:631px;top:392px;width:37px;height:18px;line-height:18px;text-align:center;font-size:11px;color:#000;white-space:pre;overflow:hidden;">5</div>
<div style="position:absolute;left:669px;top:393px;width:87px;height:18px;background:#ffffff;"></div>
<div style="position:absolute;left:739px;top:393px;width:17px;height:18px;background:#e1e1e1;border:1px solid #bfbfbf;"></div>
<svg style="position:absolute;left:743px;top:400px" width="9" height="5" viewBox="0 0 9 5"><path d="M0.5 0.5 L4.5 4.5 L8.5 0.5" stroke="#404040" stroke-width="1.1" fill="none"/></svg>
<div style="position:absolute;left:757px;top:393px;width:51px;height:18px;background:#c0c0c0;"></div>
<div style="position:absolute;left:809px;top:393px;width:43px;height:18px;background:#c0c0c0;"></div>
<div style="position:absolute;left:853px;top:393px;width:43px;height:18px;background:#c0c0c0;"></div>
<div style="position:absolute;left:897px;top:393px;width:49px;height:18px;background:#c0c0c0;"></div>
<svg style="position:absolute;left:913px;top:395px" width="16" height="16" viewBox="0 0 16 16"><path d="M0 8 L4.5 0 H5.5 V4 H10.5 V0 H11.5 L16 8 L11.5 16 H10.5 V12 H5.5 V16 H4.5 Z" fill="#000"/></svg>
<div style="position:absolute;left:947px;top:393px;width:79px;height:18px;background:#c0c0c0;"></div>
<div style="position:absolute;left:1007px;top:393px;width:17px;height:18px;background:#e1e1e1;border:1px solid #bfbfbf;"></div>
<svg style="position:absolute;left:1011px;top:400px" width="9" height="5" viewBox="0 0 9 5"><path d="M0.5 0.5 L4.5 4.5 L8.5 0.5" stroke="#404040" stroke-width="1.1" fill="none"/></svg>
<div style="position:absolute;left:1027px;top:393px;width:87px;height:18px;background:#c0c0c0;"></div>
<div style="position:absolute;left:1115px;top:393px;width:50px;height:18px;background:#c0c0c0;"></div>
<div style="position:absolute;left:1166px;top:393px;width:43px;height:18px;background:#c0c0c0;"></div>
<div style="position:absolute;left:1210px;top:393px;width:40px;height:18px;background:#c0c0c0;"></div>
<div style="position:absolute;left:631px;top:411px;width:619px;height:1px;background:#a0a0a0;"></div>
<div style="position:absolute;left:668px;top:393px;width:1px;height:19px;background:#a0a0a0;"></div>
<div style="position:absolute;left:756px;top:393px;width:1px;height:19px;background:#a0a0a0;"></div>
<div style="position:absolute;left:808px;top:393px;width:1px;height:19px;background:#a0a0a0;"></div>
<div style="position:absolute;left:852px;top:393px;width:1px;height:19px;background:#a0a0a0;"></div>
<div style="position:absolute;left:896px;top:393px;width:1px;height:19px;background:#a0a0a0;"></div>
<div style="position:absolute;left:946px;top:393px;width:1px;height:19px;background:#a0a0a0;"></div>
<div style="position:absolute;left:1026px;top:393px;width:1px;height:19px;background:#a0a0a0;"></div>
<div style="position:absolute;left:1114px;top:393px;width:1px;height:19px;background:#a0a0a0;"></div>
<div style="position:absolute;left:1165px;top:393px;width:1px;height:19px;background:#a0a0a0;"></div>
<div style="position:absolute;left:1209px;top:393px;width:1px;height:19px;background:#a0a0a0;"></div>
<div style="position:absolute;left:1250px;top:393px;width:1px;height:19px;background:#a0a0a0;"></div>
<div style="position:absolute;left:631px;top:412px;width:37px;height:18px;background:#d6e8fc;"></div>
<div style="position:absolute;left:631px;top:411px;width:37px;height:18px;line-height:18px;text-align:center;font-size:11px;color:#000;white-space:pre;overflow:hidden;">6</div>
<div style="position:absolute;left:669px;top:412px;width:87px;height:18px;background:#ffffff;"></div>
<div style="position:absolute;left:739px;top:412px;width:17px;height:18px;background:#e1e1e1;border:1px solid #bfbfbf;"></div>
<svg style="position:absolute;left:743px;top:419px" width="9" height="5" viewBox="0 0 9 5"><path d="M0.5 0.5 L4.5 4.5 L8.5 0.5" stroke="#404040" stroke-width="1.1" fill="none"/></svg>
<div style="position:absolute;left:757px;top:412px;width:51px;height:18px;background:#c0c0c0;"></div>
<div style="position:absolute;left:809px;top:412px;width:43px;height:18px;background:#c0c0c0;"></div>
<div style="position:absolute;left:853px;top:412px;width:43px;height:18px;background:#c0c0c0;"></div>
<div style="position:absolute;left:897px;top:412px;width:49px;height:18px;background:#c0c0c0;"></div>
<svg style="position:absolute;left:913px;top:414px" width="16" height="16" viewBox="0 0 16 16"><path d="M0 8 L4.5 0 H5.5 V4 H10.5 V0 H11.5 L16 8 L11.5 16 H10.5 V12 H5.5 V16 H4.5 Z" fill="#000"/></svg>
<div style="position:absolute;left:947px;top:412px;width:79px;height:18px;background:#c0c0c0;"></div>
<div style="position:absolute;left:1007px;top:412px;width:17px;height:18px;background:#e1e1e1;border:1px solid #bfbfbf;"></div>
<svg style="position:absolute;left:1011px;top:419px" width="9" height="5" viewBox="0 0 9 5"><path d="M0.5 0.5 L4.5 4.5 L8.5 0.5" stroke="#404040" stroke-width="1.1" fill="none"/></svg>
<div style="position:absolute;left:1027px;top:412px;width:87px;height:18px;background:#c0c0c0;"></div>
<div style="position:absolute;left:1115px;top:412px;width:50px;height:18px;background:#c0c0c0;"></div>
<div style="position:absolute;left:1166px;top:412px;width:43px;height:18px;background:#c0c0c0;"></div>
<div style="position:absolute;left:1210px;top:412px;width:40px;height:18px;background:#c0c0c0;"></div>
<div style="position:absolute;left:631px;top:430px;width:619px;height:1px;background:#a0a0a0;"></div>
<div style="position:absolute;left:668px;top:412px;width:1px;height:19px;background:#a0a0a0;"></div>
<div style="position:absolute;left:756px;top:412px;width:1px;height:19px;background:#a0a0a0;"></div>
<div style="position:absolute;left:808px;top:412px;width:1px;height:19px;background:#a0a0a0;"></div>
<div style="position:absolute;left:852px;top:412px;width:1px;height:19px;background:#a0a0a0;"></div>
<div style="position:absolute;left:896px;top:412px;width:1px;height:19px;background:#a0a0a0;"></div>
<div style="position:absolute;left:946px;top:412px;width:1px;height:19px;background:#a0a0a0;"></div>
<div style="position:absolute;left:1026px;top:412px;width:1px;height:19px;background:#a0a0a0;"></div>
<div style="position:absolute;left:1114px;top:412px;width:1px;height:19px;background:#a0a0a0;"></div>
<div style="position:absolute;left:1165px;top:412px;width:1px;height:19px;background:#a0a0a0;"></div>
<div style="position:absolute;left:1209px;top:412px;width:1px;height:19px;background:#a0a0a0;"></div>
<div style="position:absolute;left:1250px;top:412px;width:1px;height:19px;background:#a0a0a0;"></div>
<div style="position:absolute;left:631px;top:431px;width:37px;height:18px;background:#d6e8fc;"></div>
<div style="position:absolute;left:631px;top:430px;width:37px;height:18px;line-height:18px;text-align:center;font-size:11px;color:#000;white-space:pre;overflow:hidden;">7</div>
<div style="position:absolute;left:669px;top:431px;width:87px;height:18px;background:#ffffff;"></div>
<div style="position:absolute;left:739px;top:431px;width:17px;height:18px;background:#e1e1e1;border:1px solid #bfbfbf;"></div>
<svg style="position:absolute;left:743px;top:438px" width="9" height="5" viewBox="0 0 9 5"><path d="M0.5 0.5 L4.5 4.5 L8.5 0.5" stroke="#404040" stroke-width="1.1" fill="none"/></svg>
<div style="position:absolute;left:757px;top:431px;width:51px;height:18px;background:#c0c0c0;"></div>
<div style="position:absolute;left:809px;top:431px;width:43px;height:18px;background:#c0c0c0;"></div>
<div style="position:absolute;left:853px;top:431px;width:43px;height:18px;background:#c0c0c0;"></div>
<div style="position:absolute;left:897px;top:431px;width:49px;height:18px;background:#c0c0c0;"></div>
<svg style="position:absolute;left:913px;top:433px" width="16" height="16" viewBox="0 0 16 16"><path d="M0 8 L4.5 0 H5.5 V4 H10.5 V0 H11.5 L16 8 L11.5 16 H10.5 V12 H5.5 V16 H4.5 Z" fill="#000"/></svg>
<div style="position:absolute;left:947px;top:431px;width:79px;height:18px;background:#c0c0c0;"></div>
<div style="position:absolute;left:1007px;top:431px;width:17px;height:18px;background:#e1e1e1;border:1px solid #bfbfbf;"></div>
<svg style="position:absolute;left:1011px;top:438px" width="9" height="5" viewBox="0 0 9 5"><path d="M0.5 0.5 L4.5 4.5 L8.5 0.5" stroke="#404040" stroke-width="1.1" fill="none"/></svg>
<div style="position:absolute;left:1027px;top:431px;width:87px;height:18px;background:#c0c0c0;"></div>
<div style="position:absolute;left:1115px;top:431px;width:50px;height:18px;background:#c0c0c0;"></div>
<div style="position:absolute;left:1166px;top:431px;width:43px;height:18px;background:#c0c0c0;"></div>
<div style="position:absolute;left:1210px;top:431px;width:40px;height:18px;background:#c0c0c0;"></div>
<div style="position:absolute;left:631px;top:449px;width:619px;height:1px;background:#a0a0a0;"></div>
<div style="position:absolute;left:668px;top:431px;width:1px;height:19px;background:#a0a0a0;"></div>
<div style="position:absolute;left:756px;top:431px;width:1px;height:19px;background:#a0a0a0;"></div>
<div style="position:absolute;left:808px;top:431px;width:1px;height:19px;background:#a0a0a0;"></div>
<div style="position:absolute;left:852px;top:431px;width:1px;height:19px;background:#a0a0a0;"></div>
<div style="position:absolute;left:896px;top:431px;width:1px;height:19px;background:#a0a0a0;"></div>
<div style="position:absolute;left:946px;top:431px;width:1px;height:19px;background:#a0a0a0;"></div>
<div style="position:absolute;left:1026px;top:431px;width:1px;height:19px;background:#a0a0a0;"></div>
<div style="position:absolute;left:1114px;top:431px;width:1px;height:19px;background:#a0a0a0;"></div>
<div style="position:absolute;left:1165px;top:431px;width:1px;height:19px;background:#a0a0a0;"></div>
<div style="position:absolute;left:1209px;top:431px;width:1px;height:19px;background:#a0a0a0;"></div>
<div style="position:absolute;left:1250px;top:431px;width:1px;height:19px;background:#a0a0a0;"></div>
<div style="position:absolute;left:631px;top:450px;width:37px;height:18px;background:#d6e8fc;"></div>
<div style="position:absolute;left:631px;top:449px;width:37px;height:18px;line-height:18px;text-align:center;font-size:11px;color:#000;white-space:pre;overflow:hidden;">8</div>
<div style="position:absolute;left:669px;top:450px;width:87px;height:18px;background:#ffffff;"></div>
<div style="position:absolute;left:739px;top:450px;width:17px;height:18px;background:#e1e1e1;border:1px solid #bfbfbf;"></div>
<svg style="position:absolute;left:743px;top:457px" width="9" height="5" viewBox="0 0 9 5"><path d="M0.5 0.5 L4.5 4.5 L8.5 0.5" stroke="#404040" stroke-width="1.1" fill="none"/></svg>
<div style="position:absolute;left:757px;top:450px;width:51px;height:18px;background:#c0c0c0;"></div>
<div style="position:absolute;left:809px;top:450px;width:43px;height:18px;background:#c0c0c0;"></div>
<div style="position:absolute;left:853px;top:450px;width:43px;height:18px;background:#c0c0c0;"></div>
<div style="position:absolute;left:897px;top:450px;width:49px;height:18px;background:#c0c0c0;"></div>
<svg style="position:absolute;left:913px;top:452px" width="16" height="16" viewBox="0 0 16 16"><path d="M0 8 L4.5 0 H5.5 V4 H10.5 V0 H11.5 L16 8 L11.5 16 H10.5 V12 H5.5 V16 H4.5 Z" fill="#000"/></svg>
<div style="position:absolute;left:947px;top:450px;width:79px;height:18px;background:#c0c0c0;"></div>
<div style="position:absolute;left:1007px;top:450px;width:17px;height:18px;background:#e1e1e1;border:1px solid #bfbfbf;"></div>
<svg style="position:absolute;left:1011px;top:457px" width="9" height="5" viewBox="0 0 9 5"><path d="M0.5 0.5 L4.5 4.5 L8.5 0.5" stroke="#404040" stroke-width="1.1" fill="none"/></svg>
<div style="position:absolute;left:1027px;top:450px;width:87px;height:18px;background:#c0c0c0;"></div>
<div style="position:absolute;left:1115px;top:450px;width:50px;height:18px;background:#c0c0c0;"></div>
<div style="position:absolute;left:1166px;top:450px;width:43px;height:18px;background:#c0c0c0;"></div>
<div style="position:absolute;left:1210px;top:450px;width:40px;height:18px;background:#c0c0c0;"></div>
<div style="position:absolute;left:631px;top:468px;width:619px;height:1px;background:#a0a0a0;"></div>
<div style="position:absolute;left:668px;top:450px;width:1px;height:19px;background:#a0a0a0;"></div>
<div style="position:absolute;left:756px;top:450px;width:1px;height:19px;background:#a0a0a0;"></div>
<div style="position:absolute;left:808px;top:450px;width:1px;height:19px;background:#a0a0a0;"></div>
<div style="position:absolute;left:852px;top:450px;width:1px;height:19px;background:#a0a0a0;"></div>
<div style="position:absolute;left:896px;top:450px;width:1px;height:19px;background:#a0a0a0;"></div>
<div style="position:absolute;left:946px;top:450px;width:1px;height:19px;background:#a0a0a0;"></div>
<div style="position:absolute;left:1026px;top:450px;width:1px;height:19px;background:#a0a0a0;"></div>
<div style="position:absolute;left:1114px;top:450px;width:1px;height:19px;background:#a0a0a0;"></div>
<div style="position:absolute;left:1165px;top:450px;width:1px;height:19px;background:#a0a0a0;"></div>
<div style="position:absolute;left:1209px;top:450px;width:1px;height:19px;background:#a0a0a0;"></div>
<div style="position:absolute;left:1250px;top:450px;width:1px;height:19px;background:#a0a0a0;"></div>
<div style="position:absolute;left:631px;top:469px;width:37px;height:18px;background:#d6e8fc;"></div>
<div style="position:absolute;left:631px;top:468px;width:37px;height:18px;line-height:18px;text-align:center;font-size:11px;color:#000;white-space:pre;overflow:hidden;">9</div>
<div style="position:absolute;left:669px;top:469px;width:87px;height:18px;background:#ffffff;"></div>
<div style="position:absolute;left:739px;top:469px;width:17px;height:18px;background:#e1e1e1;border:1px solid #bfbfbf;"></div>
<svg style="position:absolute;left:743px;top:476px" width="9" height="5" viewBox="0 0 9 5"><path d="M0.5 0.5 L4.5 4.5 L8.5 0.5" stroke="#404040" stroke-width="1.1" fill="none"/></svg>
<div style="position:absolute;left:757px;top:469px;width:51px;height:18px;background:#c0c0c0;"></div>
<div style="position:absolute;left:809px;top:469px;width:43px;height:18px;background:#c0c0c0;"></div>
<div style="position:absolute;left:853px;top:469px;width:43px;height:18px;background:#c0c0c0;"></div>
<div style="position:absolute;left:897px;top:469px;width:49px;height:18px;background:#c0c0c0;"></div>
<svg style="position:absolute;left:913px;top:471px" width="16" height="16" viewBox="0 0 16 16"><path d="M0 8 L4.5 0 H5.5 V4 H10.5 V0 H11.5 L16 8 L11.5 16 H10.5 V12 H5.5 V16 H4.5 Z" fill="#000"/></svg>
<div style="position:absolute;left:947px;top:469px;width:79px;height:18px;background:#c0c0c0;"></div>
<div style="position:absolute;left:1007px;top:469px;width:17px;height:18px;background:#e1e1e1;border:1px solid #bfbfbf;"></div>
<svg style="position:absolute;left:1011px;top:476px" width="9" height="5" viewBox="0 0 9 5"><path d="M0.5 0.5 L4.5 4.5 L8.5 0.5" stroke="#404040" stroke-width="1.1" fill="none"/></svg>
<div style="position:absolute;left:1027px;top:469px;width:87px;height:18px;background:#c0c0c0;"></div>
<div style="position:absolute;left:1115px;top:469px;width:50px;height:18px;background:#c0c0c0;"></div>
<div style="position:absolute;left:1166px;top:469px;width:43px;height:18px;background:#c0c0c0;"></div>
<div style="position:absolute;left:1210px;top:469px;width:40px;height:18px;background:#c0c0c0;"></div>
<div style="position:absolute;left:631px;top:487px;width:619px;height:1px;background:#a0a0a0;"></div>
<div style="position:absolute;left:668px;top:469px;width:1px;height:19px;background:#a0a0a0;"></div>
<div style="position:absolute;left:756px;top:469px;width:1px;height:19px;background:#a0a0a0;"></div>
<div style="position:absolute;left:808px;top:469px;width:1px;height:19px;background:#a0a0a0;"></div>
<div style="position:absolute;left:852px;top:469px;width:1px;height:19px;background:#a0a0a0;"></div>
<div style="position:absolute;left:896px;top:469px;width:1px;height:19px;background:#a0a0a0;"></div>
<div style="position:absolute;left:946px;top:469px;width:1px;height:19px;background:#a0a0a0;"></div>
<div style="position:absolute;left:1026px;top:469px;width:1px;height:19px;background:#a0a0a0;"></div>
<div style="position:absolute;left:1114px;top:469px;width:1px;height:19px;background:#a0a0a0;"></div>
<div style="position:absolute;left:1165px;top:469px;width:1px;height:19px;background:#a0a0a0;"></div>
<div style="position:absolute;left:1209px;top:469px;width:1px;height:19px;background:#a0a0a0;"></div>
<div style="position:absolute;left:1250px;top:469px;width:1px;height:19px;background:#a0a0a0;"></div>
<div style="position:absolute;left:631px;top:488px;width:37px;height:18px;background:#d6e8fc;"></div>
<div style="position:absolute;left:631px;top:487px;width:37px;height:18px;line-height:18px;text-align:center;font-size:11px;color:#000;white-space:pre;overflow:hidden;">10</div>
<div style="position:absolute;left:669px;top:488px;width:87px;height:18px;background:#ffffff;"></div>
<div style="position:absolute;left:739px;top:488px;width:17px;height:18px;background:#e1e1e1;border:1px solid #bfbfbf;"></div>
<svg style="position:absolute;left:743px;top:495px" width="9" height="5" viewBox="0 0 9 5"><path d="M0.5 0.5 L4.5 4.5 L8.5 0.5" stroke="#404040" stroke-width="1.1" fill="none"/></svg>
<div style="position:absolute;left:757px;top:488px;width:51px;height:18px;background:#c0c0c0;"></div>
<div style="position:absolute;left:809px;top:488px;width:43px;height:18px;background:#c0c0c0;"></div>
<div style="position:absolute;left:853px;top:488px;width:43px;height:18px;background:#c0c0c0;"></div>
<div style="position:absolute;left:897px;top:488px;width:49px;height:18px;background:#c0c0c0;"></div>
<svg style="position:absolute;left:913px;top:490px" width="16" height="16" viewBox="0 0 16 16"><path d="M0 8 L4.5 0 H5.5 V4 H10.5 V0 H11.5 L16 8 L11.5 16 H10.5 V12 H5.5 V16 H4.5 Z" fill="#000"/></svg>
<div style="position:absolute;left:947px;top:488px;width:79px;height:18px;background:#c0c0c0;"></div>
<div style="position:absolute;left:1007px;top:488px;width:17px;height:18px;background:#e1e1e1;border:1px solid #bfbfbf;"></div>
<svg style="position:absolute;left:1011px;top:495px" width="9" height="5" viewBox="0 0 9 5"><path d="M0.5 0.5 L4.5 4.5 L8.5 0.5" stroke="#404040" stroke-width="1.1" fill="none"/></svg>
<div style="position:absolute;left:1027px;top:488px;width:87px;height:18px;background:#c0c0c0;"></div>
<div style="position:absolute;left:1115px;top:488px;width:50px;height:18px;background:#c0c0c0;"></div>
<div style="position:absolute;left:1166px;top:488px;width:43px;height:18px;background:#c0c0c0;"></div>
<div style="position:absolute;left:1210px;top:488px;width:40px;height:18px;background:#c0c0c0;"></div>
<div style="position:absolute;left:631px;top:506px;width:619px;height:1px;background:#a0a0a0;"></div>
<div style="position:absolute;left:668px;top:488px;width:1px;height:19px;background:#a0a0a0;"></div>
<div style="position:absolute;left:756px;top:488px;width:1px;height:19px;background:#a0a0a0;"></div>
<div style="position:absolute;left:808px;top:488px;width:1px;height:19px;background:#a0a0a0;"></div>
<div style="position:absolute;left:852px;top:488px;width:1px;height:19px;background:#a0a0a0;"></div>
<div style="position:absolute;left:896px;top:488px;width:1px;height:19px;background:#a0a0a0;"></div>
<div style="position:absolute;left:946px;top:488px;width:1px;height:19px;background:#a0a0a0;"></div>
<div style="position:absolute;left:1026px;top:488px;width:1px;height:19px;background:#a0a0a0;"></div>
<div style="position:absolute;left:1114px;top:488px;width:1px;height:19px;background:#a0a0a0;"></div>
<div style="position:absolute;left:1165px;top:488px;width:1px;height:19px;background:#a0a0a0;"></div>
<div style="position:absolute;left:1209px;top:488px;width:1px;height:19px;background:#a0a0a0;"></div>
<div style="position:absolute;left:1250px;top:488px;width:1px;height:19px;background:#a0a0a0;"></div>
</div>
<div style="position:absolute;left:1299px;top:242px;width:17px;height:255px;background:#f0f0f0;"></div>
<div style="position:absolute;left:1316px;top:240px;width:2px;height:257px;background:#f8f8f8;"></div>
<svg style="position:absolute;left:1303px;top:247px" width="10" height="7" viewBox="0 0 10 7"><path d="M1 5.5 L5 1.5 L9 5.5" stroke="#505050" stroke-width="1.8" fill="none"/></svg>
<div style="position:absolute;left:1302px;top:258px;width:13px;height:17px;background:#cdcdcd;"></div>
<svg style="position:absolute;left:1303px;top:485px" width="10" height="7" viewBox="0 0 10 7"><path d="M1 1.5 L5 5.5 L9 1.5" stroke="#505050" stroke-width="1.8" fill="none"/></svg>
<div style="position:absolute;left:623px;top:330px;width:638px;height:28px;border:5px solid #ed1c24;border-width:6px 5px 5px 6px;"></div>
<div style="position:absolute;left:38px;top:460px;width:141px;height:35px;border:5px solid #ed1c24;"></div>
</body></html>
